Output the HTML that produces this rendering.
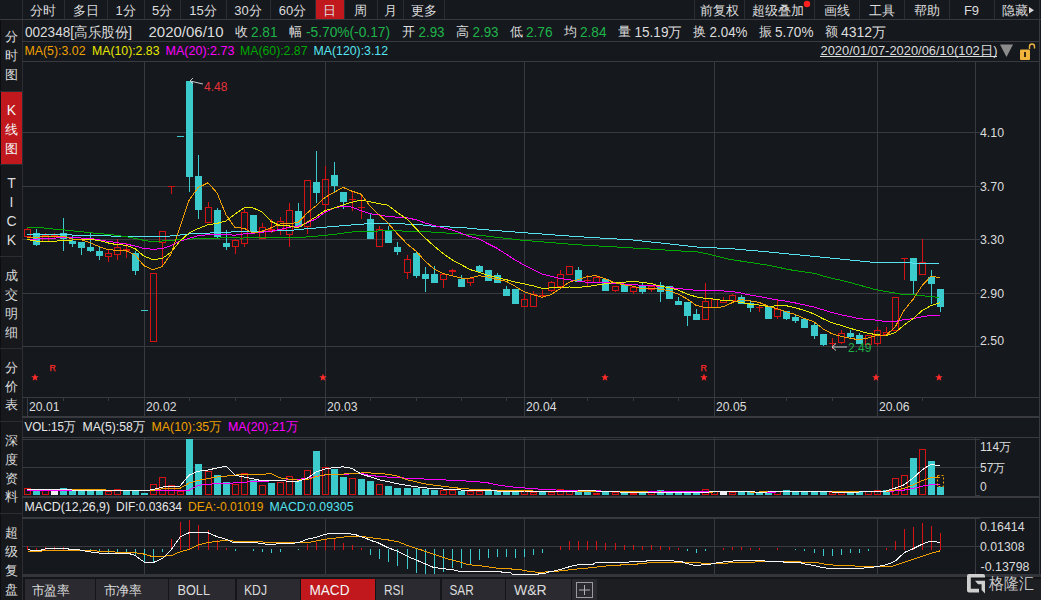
<!DOCTYPE html><html><head><meta charset="utf-8"><style>html,body{margin:0;padding:0;background:#15181d;overflow:hidden}svg{display:block;font-family:"Liberation Sans",sans-serif}</style></head><body>
<svg width="1041" height="600" viewBox="0 0 1041 600">
<rect x="0" y="0" width="1041" height="600" fill="#15181d"/>
<g shape-rendering="crispEdges">
<rect x="0" y="19" width="22" height="581" fill="#16181c"/>
<rect x="0" y="19" width="1" height="581" fill="#0c0d10"/>
<rect x="22" y="19" width="1" height="581" fill="#2c2d32"/>
<rect x="0" y="91" width="22" height="1" fill="#2c2d32"/>
<rect x="0" y="164" width="22" height="1" fill="#2c2d32"/>
<rect x="0" y="256" width="22" height="1" fill="#2c2d32"/>
<rect x="0" y="348" width="22" height="1" fill="#2c2d32"/>
<rect x="0" y="421" width="22" height="1" fill="#2c2d32"/>
<rect x="0" y="513" width="22" height="1" fill="#2c2d32"/>
<rect x="1" y="92" width="21" height="72" fill="#c0181c"/>
<rect x="0" y="19" width="1041" height="1" fill="#393a40"/>
<rect x="22" y="0" width="1" height="19" fill="#2c2d32"/>
<rect x="64" y="0" width="1" height="19" fill="#2c2d32"/>
<rect x="107" y="0" width="1" height="19" fill="#2c2d32"/>
<rect x="144" y="0" width="1" height="19" fill="#2c2d32"/>
<rect x="180" y="0" width="1" height="19" fill="#2c2d32"/>
<rect x="226" y="0" width="1" height="19" fill="#2c2d32"/>
<rect x="270" y="0" width="1" height="19" fill="#2c2d32"/>
<rect x="315" y="0" width="1" height="19" fill="#2c2d32"/>
<rect x="344" y="0" width="1" height="19" fill="#2c2d32"/>
<rect x="377" y="0" width="1" height="19" fill="#2c2d32"/>
<rect x="403" y="0" width="1" height="19" fill="#2c2d32"/>
<rect x="444" y="0" width="1" height="19" fill="#2c2d32"/>
<rect x="694" y="0" width="1" height="19" fill="#2c2d32"/>
<rect x="744" y="0" width="1" height="19" fill="#2c2d32"/>
<rect x="814" y="0" width="1" height="19" fill="#2c2d32"/>
<rect x="859" y="0" width="1" height="19" fill="#2c2d32"/>
<rect x="904" y="0" width="1" height="19" fill="#2c2d32"/>
<rect x="949" y="0" width="1" height="19" fill="#2c2d32"/>
<rect x="994" y="0" width="1" height="19" fill="#2c2d32"/>
<rect x="1039" y="0" width="1" height="19" fill="#2c2d32"/>
<rect x="316" y="0" width="28" height="19" fill="#c0181c"/>
<rect x="22" y="41" width="1018" height="1" fill="#393a40"/>
<rect x="22" y="61" width="1018" height="1" fill="#393a40"/>
<rect x="1039" y="19" width="1" height="559" fill="#393a40"/>
<rect x="22" y="132" width="958" height="1" fill="#393a40"/>
<rect x="22" y="186" width="958" height="1" fill="#393a40"/>
<rect x="22" y="239" width="958" height="1" fill="#393a40"/>
<rect x="22" y="293" width="958" height="1" fill="#393a40"/>
<rect x="22" y="346" width="958" height="1" fill="#393a40"/>
<rect x="144" y="62" width="1" height="335" fill="#393a40"/>
<rect x="325" y="62" width="1" height="335" fill="#393a40"/>
<rect x="524" y="62" width="1" height="335" fill="#393a40"/>
<rect x="714" y="62" width="1" height="335" fill="#393a40"/>
<rect x="877" y="62" width="1" height="335" fill="#393a40"/>
<rect x="975" y="62" width="1" height="335" fill="#393a40"/>
<rect x="22" y="397" width="1018" height="1" fill="#393a40"/>
<rect x="27" y="398" width="1" height="18" fill="#393a40"/>
<rect x="144" y="398" width="1" height="18" fill="#393a40"/>
<rect x="325" y="398" width="1" height="18" fill="#393a40"/>
<rect x="524" y="398" width="1" height="18" fill="#393a40"/>
<rect x="714" y="398" width="1" height="18" fill="#393a40"/>
<rect x="877" y="398" width="1" height="18" fill="#393a40"/>
<rect x="63" y="398" width="1" height="3" fill="#393a40"/>
<rect x="108" y="398" width="1" height="3" fill="#393a40"/>
<rect x="189" y="398" width="1" height="3" fill="#393a40"/>
<rect x="235" y="398" width="1" height="3" fill="#393a40"/>
<rect x="280" y="398" width="1" height="3" fill="#393a40"/>
<rect x="370" y="398" width="1" height="3" fill="#393a40"/>
<rect x="416" y="398" width="1" height="3" fill="#393a40"/>
<rect x="461" y="398" width="1" height="3" fill="#393a40"/>
<rect x="506" y="398" width="1" height="3" fill="#393a40"/>
<rect x="551" y="398" width="1" height="3" fill="#393a40"/>
<rect x="587" y="398" width="1" height="3" fill="#393a40"/>
<rect x="633" y="398" width="1" height="3" fill="#393a40"/>
<rect x="678" y="398" width="1" height="3" fill="#393a40"/>
<rect x="741" y="398" width="1" height="3" fill="#393a40"/>
<rect x="786" y="398" width="1" height="3" fill="#393a40"/>
<rect x="832" y="398" width="1" height="3" fill="#393a40"/>
<rect x="922" y="398" width="1" height="3" fill="#393a40"/>
<rect x="22" y="416" width="1018" height="2" fill="#393a40"/>
<rect x="22" y="437" width="1018" height="1" fill="#393a40"/>
<rect x="22" y="467" width="958" height="1" fill="#393a40"/>
<rect x="22" y="439" width="958" height="1" fill="#393a40"/>
<rect x="975" y="495" width="5" height="1" fill="#393a40"/>
<rect x="144" y="438" width="1" height="57" fill="#393a40"/>
<rect x="325" y="438" width="1" height="57" fill="#393a40"/>
<rect x="524" y="438" width="1" height="57" fill="#393a40"/>
<rect x="714" y="438" width="1" height="57" fill="#393a40"/>
<rect x="877" y="438" width="1" height="57" fill="#393a40"/>
<rect x="975" y="438" width="1" height="58" fill="#393a40"/>
<rect x="22" y="496" width="1018" height="2" fill="#393a40"/>
<rect x="22" y="517" width="1018" height="1" fill="#393a40"/>
<rect x="22" y="546" width="958" height="1" fill="#393a40"/>
<rect x="22" y="518" width="958" height="1" fill="#393a40"/>
<rect x="144" y="518" width="1" height="56" fill="#393a40"/>
<rect x="325" y="518" width="1" height="56" fill="#393a40"/>
<rect x="524" y="518" width="1" height="56" fill="#393a40"/>
<rect x="714" y="518" width="1" height="56" fill="#393a40"/>
<rect x="877" y="518" width="1" height="56" fill="#393a40"/>
<rect x="975" y="518" width="1" height="56" fill="#393a40"/>
<rect x="22" y="574" width="1019" height="3" fill="#34353a"/>
<rect x="23" y="577" width="1018" height="23" fill="#141519"/>
<rect x="25" y="579" width="70" height="21" fill="#2a2a30"/>
<rect x="96" y="579" width="72" height="21" fill="#2a2a30"/>
<rect x="169" y="579" width="66" height="21" fill="#2a2a30"/>
<rect x="237" y="579" width="63" height="21" fill="#2a2a30"/>
<rect x="301" y="579" width="74" height="21" fill="#2a2a30"/>
<rect x="376" y="579" width="64" height="21" fill="#2a2a30"/>
<rect x="442" y="579" width="63" height="21" fill="#2a2a30"/>
<rect x="506" y="579" width="65" height="21" fill="#2a2a30"/>
<rect x="572" y="579" width="25" height="21" fill="#2a2a30"/>
<rect x="301" y="579" width="74" height="21" fill="#c0181c"/>
<rect x="597" y="579" width="444" height="21" fill="#1d1e22"/>
</g>
<g shape-rendering="crispEdges">
<rect x="27" y="228" width="1" height="1" fill="#d41414"/>
<rect x="24" y="229" width="7" height="1" fill="#d41414"/>
<rect x="24" y="236" width="7" height="1" fill="#d41414"/>
<rect x="24" y="229" width="1" height="7" fill="#d41414"/>
<rect x="30" y="229" width="1" height="7" fill="#d41414"/>
<rect x="36" y="229" width="1" height="4" fill="#3ccbcc"/>
<rect x="36" y="244" width="1" height="2" fill="#3ccbcc"/>
<rect x="33" y="233" width="7" height="12" fill="#3ccbcc"/>
<rect x="45" y="233" width="1" height="2" fill="#d41414"/>
<rect x="42" y="235" width="7" height="1" fill="#d41414"/>
<rect x="42" y="241" width="7" height="1" fill="#d41414"/>
<rect x="42" y="235" width="1" height="6" fill="#d41414"/>
<rect x="48" y="235" width="1" height="6" fill="#d41414"/>
<rect x="54" y="233" width="1" height="5" fill="#d41414"/>
<rect x="51" y="235" width="7" height="1" fill="#d41414"/>
<rect x="63" y="218" width="1" height="15" fill="#3ccbcc"/>
<rect x="63" y="238" width="1" height="13" fill="#3ccbcc"/>
<rect x="60" y="233" width="7" height="6" fill="#3ccbcc"/>
<rect x="72" y="236" width="1" height="5" fill="#3ccbcc"/>
<rect x="72" y="243" width="1" height="4" fill="#3ccbcc"/>
<rect x="69" y="241" width="7" height="3" fill="#3ccbcc"/>
<rect x="81" y="247" width="1" height="8" fill="#3ccbcc"/>
<rect x="78" y="242" width="7" height="6" fill="#3ccbcc"/>
<rect x="90" y="232" width="1" height="15" fill="#3ccbcc"/>
<rect x="90" y="250" width="1" height="2" fill="#3ccbcc"/>
<rect x="87" y="247" width="7" height="4" fill="#3ccbcc"/>
<rect x="99" y="247" width="1" height="4" fill="#3ccbcc"/>
<rect x="99" y="255" width="1" height="5" fill="#3ccbcc"/>
<rect x="96" y="251" width="7" height="5" fill="#3ccbcc"/>
<rect x="108" y="250" width="1" height="3" fill="#d41414"/>
<rect x="108" y="256" width="1" height="6" fill="#d41414"/>
<rect x="105" y="253" width="7" height="1" fill="#d41414"/>
<rect x="105" y="256" width="7" height="1" fill="#d41414"/>
<rect x="105" y="253" width="1" height="3" fill="#d41414"/>
<rect x="111" y="253" width="1" height="3" fill="#d41414"/>
<rect x="117" y="239" width="1" height="8" fill="#d41414"/>
<rect x="117" y="254" width="1" height="6" fill="#d41414"/>
<rect x="114" y="247" width="7" height="1" fill="#d41414"/>
<rect x="114" y="254" width="7" height="1" fill="#d41414"/>
<rect x="114" y="247" width="1" height="7" fill="#d41414"/>
<rect x="120" y="247" width="1" height="7" fill="#d41414"/>
<rect x="126" y="243" width="1" height="15" fill="#d41414"/>
<rect x="123" y="249" width="7" height="2" fill="#d41414"/>
<rect x="135" y="251" width="1" height="2" fill="#3ccbcc"/>
<rect x="135" y="270" width="1" height="5" fill="#3ccbcc"/>
<rect x="132" y="253" width="7" height="18" fill="#3ccbcc"/>
<rect x="141" y="310" width="7" height="1" fill="#3ccbcc"/>
<rect x="150" y="273" width="7" height="1" fill="#d41414"/>
<rect x="150" y="341" width="7" height="1" fill="#d41414"/>
<rect x="150" y="273" width="1" height="68" fill="#d41414"/>
<rect x="156" y="273" width="1" height="68" fill="#d41414"/>
<rect x="162" y="242" width="1" height="23" fill="#d41414"/>
<rect x="159" y="231" width="7" height="1" fill="#d41414"/>
<rect x="159" y="242" width="7" height="1" fill="#d41414"/>
<rect x="159" y="231" width="1" height="11" fill="#d41414"/>
<rect x="165" y="231" width="1" height="11" fill="#d41414"/>
<rect x="168" y="186" width="7" height="1" fill="#d41414"/>
<rect x="171" y="186" width="1" height="8" fill="#d41414"/>
<rect x="177" y="136" width="7" height="1" fill="#3ccbcc"/>
<rect x="189" y="176" width="1" height="16" fill="#3ccbcc"/>
<rect x="186" y="81" width="7" height="96" fill="#3ccbcc"/>
<rect x="198" y="155" width="1" height="21" fill="#3ccbcc"/>
<rect x="198" y="209" width="1" height="10" fill="#3ccbcc"/>
<rect x="195" y="176" width="7" height="34" fill="#3ccbcc"/>
<rect x="208" y="202" width="1" height="5" fill="#d41414"/>
<rect x="205" y="207" width="7" height="1" fill="#d41414"/>
<rect x="205" y="222" width="7" height="1" fill="#d41414"/>
<rect x="205" y="207" width="1" height="15" fill="#d41414"/>
<rect x="211" y="207" width="1" height="15" fill="#d41414"/>
<rect x="217" y="208" width="1" height="2" fill="#3ccbcc"/>
<rect x="217" y="236" width="1" height="3" fill="#3ccbcc"/>
<rect x="214" y="210" width="7" height="27" fill="#3ccbcc"/>
<rect x="226" y="230" width="1" height="13" fill="#3ccbcc"/>
<rect x="226" y="246" width="1" height="4" fill="#3ccbcc"/>
<rect x="223" y="243" width="7" height="4" fill="#3ccbcc"/>
<rect x="235" y="239" width="1" height="1" fill="#d41414"/>
<rect x="235" y="246" width="1" height="8" fill="#d41414"/>
<rect x="232" y="240" width="7" height="1" fill="#d41414"/>
<rect x="232" y="246" width="7" height="1" fill="#d41414"/>
<rect x="232" y="240" width="1" height="6" fill="#d41414"/>
<rect x="238" y="240" width="1" height="6" fill="#d41414"/>
<rect x="244" y="209" width="1" height="3" fill="#d41414"/>
<rect x="244" y="243" width="1" height="4" fill="#d41414"/>
<rect x="241" y="212" width="7" height="1" fill="#d41414"/>
<rect x="241" y="243" width="7" height="1" fill="#d41414"/>
<rect x="241" y="212" width="1" height="31" fill="#d41414"/>
<rect x="247" y="212" width="1" height="31" fill="#d41414"/>
<rect x="250" y="215" width="7" height="17" fill="#3ccbcc"/>
<rect x="262" y="223" width="1" height="4" fill="#d41414"/>
<rect x="259" y="227" width="7" height="1" fill="#d41414"/>
<rect x="259" y="238" width="7" height="1" fill="#d41414"/>
<rect x="259" y="227" width="1" height="11" fill="#d41414"/>
<rect x="265" y="227" width="1" height="11" fill="#d41414"/>
<rect x="271" y="219" width="1" height="14" fill="#d41414"/>
<rect x="268" y="229" width="7" height="3" fill="#d41414"/>
<rect x="280" y="217" width="1" height="4" fill="#d41414"/>
<rect x="280" y="229" width="1" height="6" fill="#d41414"/>
<rect x="277" y="221" width="7" height="1" fill="#d41414"/>
<rect x="277" y="229" width="7" height="1" fill="#d41414"/>
<rect x="277" y="221" width="1" height="8" fill="#d41414"/>
<rect x="283" y="221" width="1" height="8" fill="#d41414"/>
<rect x="289" y="203" width="1" height="7" fill="#d41414"/>
<rect x="289" y="234" width="1" height="13" fill="#d41414"/>
<rect x="286" y="210" width="7" height="1" fill="#d41414"/>
<rect x="286" y="234" width="7" height="1" fill="#d41414"/>
<rect x="286" y="210" width="1" height="24" fill="#d41414"/>
<rect x="292" y="210" width="1" height="24" fill="#d41414"/>
<rect x="298" y="203" width="1" height="8" fill="#3ccbcc"/>
<rect x="295" y="211" width="7" height="16" fill="#3ccbcc"/>
<rect x="307" y="226" width="1" height="8" fill="#d41414"/>
<rect x="304" y="180" width="7" height="1" fill="#d41414"/>
<rect x="304" y="226" width="7" height="1" fill="#d41414"/>
<rect x="304" y="180" width="1" height="46" fill="#d41414"/>
<rect x="310" y="180" width="1" height="46" fill="#d41414"/>
<rect x="316" y="151" width="1" height="31" fill="#3ccbcc"/>
<rect x="316" y="192" width="1" height="11" fill="#3ccbcc"/>
<rect x="313" y="182" width="7" height="11" fill="#3ccbcc"/>
<rect x="325" y="166" width="1" height="13" fill="#d41414"/>
<rect x="325" y="204" width="1" height="7" fill="#d41414"/>
<rect x="322" y="179" width="7" height="1" fill="#d41414"/>
<rect x="322" y="204" width="7" height="1" fill="#d41414"/>
<rect x="322" y="179" width="1" height="25" fill="#d41414"/>
<rect x="328" y="179" width="1" height="25" fill="#d41414"/>
<rect x="334" y="162" width="1" height="13" fill="#3ccbcc"/>
<rect x="334" y="185" width="1" height="7" fill="#3ccbcc"/>
<rect x="331" y="175" width="7" height="11" fill="#3ccbcc"/>
<rect x="343" y="201" width="1" height="8" fill="#3ccbcc"/>
<rect x="340" y="192" width="7" height="10" fill="#3ccbcc"/>
<rect x="352" y="192" width="1" height="19" fill="#d41414"/>
<rect x="349" y="199" width="7" height="1" fill="#d41414"/>
<rect x="361" y="195" width="1" height="24" fill="#d41414"/>
<rect x="358" y="207" width="7" height="1" fill="#d41414"/>
<rect x="370" y="214" width="1" height="5" fill="#3ccbcc"/>
<rect x="367" y="219" width="7" height="20" fill="#3ccbcc"/>
<rect x="379" y="226" width="1" height="3" fill="#d41414"/>
<rect x="376" y="229" width="7" height="1" fill="#d41414"/>
<rect x="376" y="246" width="7" height="1" fill="#d41414"/>
<rect x="376" y="229" width="1" height="17" fill="#d41414"/>
<rect x="382" y="229" width="1" height="17" fill="#d41414"/>
<rect x="388" y="226" width="1" height="5" fill="#3ccbcc"/>
<rect x="385" y="231" width="7" height="12" fill="#3ccbcc"/>
<rect x="397" y="242" width="1" height="5" fill="#3ccbcc"/>
<rect x="397" y="251" width="1" height="4" fill="#3ccbcc"/>
<rect x="394" y="247" width="7" height="5" fill="#3ccbcc"/>
<rect x="407" y="255" width="1" height="4" fill="#d41414"/>
<rect x="407" y="272" width="1" height="7" fill="#d41414"/>
<rect x="404" y="259" width="7" height="1" fill="#d41414"/>
<rect x="404" y="272" width="7" height="1" fill="#d41414"/>
<rect x="404" y="259" width="1" height="13" fill="#d41414"/>
<rect x="410" y="259" width="1" height="13" fill="#d41414"/>
<rect x="416" y="251" width="1" height="2" fill="#3ccbcc"/>
<rect x="416" y="275" width="1" height="3" fill="#3ccbcc"/>
<rect x="413" y="253" width="7" height="23" fill="#3ccbcc"/>
<rect x="425" y="267" width="1" height="7" fill="#3ccbcc"/>
<rect x="425" y="278" width="1" height="14" fill="#3ccbcc"/>
<rect x="422" y="274" width="7" height="5" fill="#3ccbcc"/>
<rect x="434" y="266" width="1" height="8" fill="#3ccbcc"/>
<rect x="431" y="274" width="7" height="9" fill="#3ccbcc"/>
<rect x="443" y="279" width="1" height="9" fill="#d41414"/>
<rect x="440" y="274" width="7" height="1" fill="#d41414"/>
<rect x="440" y="279" width="7" height="1" fill="#d41414"/>
<rect x="440" y="274" width="1" height="5" fill="#d41414"/>
<rect x="446" y="274" width="1" height="5" fill="#d41414"/>
<rect x="452" y="269" width="1" height="7" fill="#d41414"/>
<rect x="449" y="270" width="7" height="2" fill="#d41414"/>
<rect x="461" y="275" width="1" height="4" fill="#3ccbcc"/>
<rect x="458" y="279" width="7" height="8" fill="#3ccbcc"/>
<rect x="470" y="282" width="1" height="4" fill="#d41414"/>
<rect x="467" y="278" width="7" height="1" fill="#d41414"/>
<rect x="467" y="282" width="7" height="1" fill="#d41414"/>
<rect x="467" y="278" width="1" height="4" fill="#d41414"/>
<rect x="473" y="278" width="1" height="4" fill="#d41414"/>
<rect x="479" y="265" width="1" height="1" fill="#3ccbcc"/>
<rect x="476" y="266" width="7" height="6" fill="#3ccbcc"/>
<rect x="485" y="270" width="7" height="11" fill="#3ccbcc"/>
<rect x="497" y="273" width="1" height="2" fill="#3ccbcc"/>
<rect x="494" y="275" width="7" height="8" fill="#3ccbcc"/>
<rect x="506" y="286" width="1" height="3" fill="#3ccbcc"/>
<rect x="503" y="289" width="7" height="7" fill="#3ccbcc"/>
<rect x="512" y="289" width="7" height="15" fill="#3ccbcc"/>
<rect x="524" y="294" width="1" height="5" fill="#d41414"/>
<rect x="521" y="299" width="7" height="1" fill="#d41414"/>
<rect x="521" y="306" width="7" height="1" fill="#d41414"/>
<rect x="521" y="299" width="1" height="7" fill="#d41414"/>
<rect x="527" y="299" width="1" height="7" fill="#d41414"/>
<rect x="533" y="291" width="1" height="3" fill="#d41414"/>
<rect x="530" y="294" width="7" height="1" fill="#d41414"/>
<rect x="530" y="306" width="7" height="1" fill="#d41414"/>
<rect x="530" y="294" width="1" height="12" fill="#d41414"/>
<rect x="536" y="294" width="1" height="12" fill="#d41414"/>
<rect x="542" y="290" width="1" height="8" fill="#d41414"/>
<rect x="539" y="295" width="7" height="1" fill="#d41414"/>
<rect x="551" y="281" width="1" height="1" fill="#d41414"/>
<rect x="551" y="290" width="1" height="2" fill="#d41414"/>
<rect x="548" y="282" width="7" height="1" fill="#d41414"/>
<rect x="548" y="290" width="7" height="1" fill="#d41414"/>
<rect x="548" y="282" width="1" height="8" fill="#d41414"/>
<rect x="554" y="282" width="1" height="8" fill="#d41414"/>
<rect x="560" y="270" width="1" height="4" fill="#d41414"/>
<rect x="557" y="274" width="7" height="1" fill="#d41414"/>
<rect x="557" y="286" width="7" height="1" fill="#d41414"/>
<rect x="557" y="274" width="1" height="12" fill="#d41414"/>
<rect x="563" y="274" width="1" height="12" fill="#d41414"/>
<rect x="566" y="266" width="7" height="1" fill="#d41414"/>
<rect x="566" y="274" width="7" height="1" fill="#d41414"/>
<rect x="566" y="266" width="1" height="8" fill="#d41414"/>
<rect x="572" y="266" width="1" height="8" fill="#d41414"/>
<rect x="578" y="267" width="1" height="3" fill="#3ccbcc"/>
<rect x="575" y="270" width="7" height="12" fill="#3ccbcc"/>
<rect x="587" y="275" width="1" height="12" fill="#d41414"/>
<rect x="584" y="280" width="7" height="1" fill="#d41414"/>
<rect x="596" y="275" width="1" height="2" fill="#d41414"/>
<rect x="593" y="277" width="7" height="1" fill="#d41414"/>
<rect x="593" y="282" width="7" height="1" fill="#d41414"/>
<rect x="593" y="277" width="1" height="5" fill="#d41414"/>
<rect x="599" y="277" width="1" height="5" fill="#d41414"/>
<rect x="602" y="279" width="7" height="12" fill="#3ccbcc"/>
<rect x="615" y="290" width="1" height="2" fill="#d41414"/>
<rect x="612" y="286" width="7" height="1" fill="#d41414"/>
<rect x="612" y="290" width="7" height="1" fill="#d41414"/>
<rect x="612" y="286" width="1" height="4" fill="#d41414"/>
<rect x="618" y="286" width="1" height="4" fill="#d41414"/>
<rect x="621" y="284" width="7" height="8" fill="#3ccbcc"/>
<rect x="633" y="291" width="1" height="3" fill="#d41414"/>
<rect x="630" y="287" width="7" height="1" fill="#d41414"/>
<rect x="630" y="291" width="7" height="1" fill="#d41414"/>
<rect x="630" y="287" width="1" height="4" fill="#d41414"/>
<rect x="636" y="287" width="1" height="4" fill="#d41414"/>
<rect x="642" y="283" width="1" height="3" fill="#3ccbcc"/>
<rect x="642" y="291" width="1" height="3" fill="#3ccbcc"/>
<rect x="639" y="286" width="7" height="6" fill="#3ccbcc"/>
<rect x="651" y="285" width="1" height="1" fill="#d41414"/>
<rect x="651" y="289" width="1" height="3" fill="#d41414"/>
<rect x="648" y="286" width="7" height="1" fill="#d41414"/>
<rect x="648" y="289" width="7" height="1" fill="#d41414"/>
<rect x="648" y="286" width="1" height="3" fill="#d41414"/>
<rect x="654" y="286" width="1" height="3" fill="#d41414"/>
<rect x="660" y="282" width="1" height="3" fill="#3ccbcc"/>
<rect x="660" y="291" width="1" height="11" fill="#3ccbcc"/>
<rect x="657" y="285" width="7" height="7" fill="#3ccbcc"/>
<rect x="666" y="286" width="7" height="13" fill="#3ccbcc"/>
<rect x="678" y="297" width="1" height="4" fill="#3ccbcc"/>
<rect x="675" y="301" width="7" height="4" fill="#3ccbcc"/>
<rect x="687" y="315" width="1" height="11" fill="#3ccbcc"/>
<rect x="684" y="302" width="7" height="14" fill="#3ccbcc"/>
<rect x="696" y="309" width="1" height="5" fill="#3ccbcc"/>
<rect x="693" y="314" width="7" height="6" fill="#3ccbcc"/>
<rect x="705" y="283" width="1" height="18" fill="#d41414"/>
<rect x="702" y="301" width="7" height="1" fill="#d41414"/>
<rect x="702" y="319" width="7" height="1" fill="#d41414"/>
<rect x="702" y="301" width="1" height="18" fill="#d41414"/>
<rect x="708" y="301" width="1" height="18" fill="#d41414"/>
<rect x="711" y="299" width="7" height="1" fill="#d41414"/>
<rect x="711" y="307" width="7" height="1" fill="#d41414"/>
<rect x="711" y="299" width="1" height="8" fill="#d41414"/>
<rect x="717" y="299" width="1" height="8" fill="#d41414"/>
<rect x="723" y="297" width="1" height="3" fill="#d41414"/>
<rect x="720" y="300" width="7" height="1" fill="#d41414"/>
<rect x="720" y="302" width="7" height="1" fill="#d41414"/>
<rect x="720" y="300" width="1" height="2" fill="#d41414"/>
<rect x="726" y="300" width="1" height="2" fill="#d41414"/>
<rect x="732" y="294" width="1" height="1" fill="#d41414"/>
<rect x="732" y="300" width="1" height="3" fill="#d41414"/>
<rect x="729" y="295" width="7" height="1" fill="#d41414"/>
<rect x="729" y="300" width="7" height="1" fill="#d41414"/>
<rect x="729" y="295" width="1" height="5" fill="#d41414"/>
<rect x="735" y="295" width="1" height="5" fill="#d41414"/>
<rect x="741" y="295" width="1" height="2" fill="#3ccbcc"/>
<rect x="738" y="297" width="7" height="7" fill="#3ccbcc"/>
<rect x="750" y="301" width="1" height="2" fill="#3ccbcc"/>
<rect x="750" y="307" width="1" height="5" fill="#3ccbcc"/>
<rect x="747" y="303" width="7" height="5" fill="#3ccbcc"/>
<rect x="759" y="305" width="1" height="7" fill="#d41414"/>
<rect x="756" y="307" width="7" height="1" fill="#d41414"/>
<rect x="765" y="307" width="7" height="12" fill="#3ccbcc"/>
<rect x="777" y="300" width="1" height="9" fill="#d41414"/>
<rect x="777" y="316" width="1" height="3" fill="#d41414"/>
<rect x="774" y="309" width="7" height="1" fill="#d41414"/>
<rect x="774" y="316" width="7" height="1" fill="#d41414"/>
<rect x="774" y="309" width="1" height="7" fill="#d41414"/>
<rect x="780" y="309" width="1" height="7" fill="#d41414"/>
<rect x="786" y="318" width="1" height="2" fill="#3ccbcc"/>
<rect x="783" y="311" width="7" height="8" fill="#3ccbcc"/>
<rect x="795" y="315" width="1" height="2" fill="#3ccbcc"/>
<rect x="795" y="320" width="1" height="3" fill="#3ccbcc"/>
<rect x="792" y="317" width="7" height="4" fill="#3ccbcc"/>
<rect x="801" y="319" width="7" height="9" fill="#3ccbcc"/>
<rect x="814" y="322" width="1" height="3" fill="#3ccbcc"/>
<rect x="814" y="335" width="1" height="4" fill="#3ccbcc"/>
<rect x="811" y="325" width="7" height="11" fill="#3ccbcc"/>
<rect x="823" y="344" width="1" height="2" fill="#3ccbcc"/>
<rect x="820" y="334" width="7" height="11" fill="#3ccbcc"/>
<rect x="832" y="338" width="1" height="11" fill="#d41414"/>
<rect x="829" y="343" width="7" height="1" fill="#d41414"/>
<rect x="841" y="330" width="1" height="3" fill="#d41414"/>
<rect x="841" y="342" width="1" height="2" fill="#d41414"/>
<rect x="838" y="333" width="7" height="1" fill="#d41414"/>
<rect x="838" y="342" width="7" height="1" fill="#d41414"/>
<rect x="838" y="333" width="1" height="9" fill="#d41414"/>
<rect x="844" y="333" width="1" height="9" fill="#d41414"/>
<rect x="850" y="330" width="1" height="3" fill="#3ccbcc"/>
<rect x="850" y="336" width="1" height="3" fill="#3ccbcc"/>
<rect x="847" y="333" width="7" height="4" fill="#3ccbcc"/>
<rect x="859" y="333" width="1" height="2" fill="#3ccbcc"/>
<rect x="856" y="335" width="7" height="9" fill="#3ccbcc"/>
<rect x="865" y="335" width="7" height="1" fill="#d41414"/>
<rect x="865" y="344" width="7" height="1" fill="#d41414"/>
<rect x="865" y="335" width="1" height="9" fill="#d41414"/>
<rect x="871" y="335" width="1" height="9" fill="#d41414"/>
<rect x="877" y="327" width="1" height="3" fill="#d41414"/>
<rect x="877" y="343" width="1" height="3" fill="#d41414"/>
<rect x="874" y="330" width="7" height="1" fill="#d41414"/>
<rect x="874" y="343" width="7" height="1" fill="#d41414"/>
<rect x="874" y="330" width="1" height="13" fill="#d41414"/>
<rect x="880" y="330" width="1" height="13" fill="#d41414"/>
<rect x="886" y="327" width="1" height="5" fill="#d41414"/>
<rect x="883" y="332" width="7" height="1" fill="#d41414"/>
<rect x="883" y="334" width="7" height="1" fill="#d41414"/>
<rect x="883" y="332" width="1" height="2" fill="#d41414"/>
<rect x="889" y="332" width="1" height="2" fill="#d41414"/>
<rect x="892" y="297" width="7" height="1" fill="#d41414"/>
<rect x="892" y="330" width="7" height="1" fill="#d41414"/>
<rect x="892" y="297" width="1" height="33" fill="#d41414"/>
<rect x="898" y="297" width="1" height="33" fill="#d41414"/>
<rect x="901" y="258" width="7" height="1" fill="#d41414"/>
<rect x="904" y="258" width="1" height="22" fill="#d41414"/>
<rect x="913" y="280" width="1" height="14" fill="#3ccbcc"/>
<rect x="910" y="258" width="7" height="23" fill="#3ccbcc"/>
<rect x="922" y="239" width="1" height="23" fill="#d41414"/>
<rect x="919" y="262" width="7" height="1" fill="#d41414"/>
<rect x="919" y="274" width="7" height="1" fill="#d41414"/>
<rect x="919" y="262" width="1" height="12" fill="#d41414"/>
<rect x="925" y="262" width="1" height="12" fill="#d41414"/>
<rect x="931" y="270" width="1" height="7" fill="#3ccbcc"/>
<rect x="931" y="283" width="1" height="21" fill="#3ccbcc"/>
<rect x="928" y="277" width="7" height="7" fill="#3ccbcc"/>
<rect x="940" y="306" width="1" height="6" fill="#3ccbcc"/>
<rect x="937" y="289" width="7" height="18" fill="#3ccbcc"/>
</g>
<g shape-rendering="crispEdges">
<polyline points="27.0,234.6 30.0,234.6 33.0,234.6 36.0,234.7 39.0,234.7 42.0,234.7 45.0,234.7 48.0,234.8 51.0,234.8 54.0,234.8 57.0,234.8 60.0,234.8 63.0,234.9 66.0,234.9 69.0,234.9 72.0,235.0 75.0,235.1 78.0,235.2 81.0,235.2 84.0,235.3 87.0,235.4 90.0,235.5 93.0,235.5 96.0,235.6 99.0,235.7 102.0,235.8 105.0,235.9 108.0,235.9 111.0,236.0 114.0,236.1 117.0,236.2 120.0,236.2 123.0,236.3 126.0,236.4 129.0,236.5 132.0,236.5 135.0,236.6 138.0,236.6 141.0,236.6 144.0,236.7 147.0,236.7 150.0,236.8 153.0,236.8 156.0,236.8 159.0,236.9 162.0,236.7 165.0,236.5 168.0,236.2 171.0,235.9 174.0,235.7 177.0,235.4 180.0,235.0 183.0,234.6 186.0,234.2 189.0,234.0 192.0,233.9 195.0,233.8 198.0,233.6 201.0,233.4 204.0,233.3 207.0,233.2 210.0,233.0 213.0,232.8 216.0,232.7 219.0,232.6 222.0,232.4 225.0,232.2 228.0,232.1 231.0,232.0 234.0,231.9 237.0,231.8 240.0,231.7 243.0,231.7 246.0,231.6 249.0,231.5 252.0,231.5 255.0,231.4 258.0,231.3 261.0,231.3 264.0,231.2 267.0,231.1 270.0,231.1 273.0,231.0 276.0,230.9 279.0,230.9 282.0,230.8 285.0,230.7 288.0,230.5 291.0,230.2 294.0,230.0 297.0,229.7 300.0,229.4 303.0,229.1 306.0,228.9 309.0,228.6 312.0,228.3 315.0,228.1 318.0,227.8 321.0,227.5 324.0,227.2 327.0,227.0 330.0,226.7 333.0,226.4 336.0,226.2 339.0,226.0 342.0,225.7 345.0,225.5 348.0,225.3 351.0,225.0 354.0,224.8 357.0,224.6 360.0,224.3 363.0,224.1 366.0,223.9 369.0,223.8 372.0,223.8 375.0,223.8 378.0,223.8 381.0,223.8 384.0,223.8 387.0,223.8 390.0,223.8 393.0,223.8 396.0,223.8 399.0,223.8 402.0,223.8 405.0,224.0 408.0,224.1 411.0,224.3 414.0,224.4 417.0,224.6 420.0,224.7 423.0,225.0 426.0,225.4 429.0,225.7 432.0,226.1 435.0,226.4 438.0,226.6 441.0,226.7 444.0,226.8 447.0,226.9 450.0,227.0 453.0,227.1 456.0,227.2 459.0,227.3 462.0,227.5 465.0,227.8 468.0,228.1 471.0,228.4 474.0,228.7 477.0,229.0 480.0,229.3 483.0,229.5 486.0,229.8 489.0,230.0 492.0,230.2 495.0,230.5 498.0,230.7 501.0,230.9 504.0,231.2 507.0,231.4 510.0,231.6 513.0,231.9 516.0,232.1 519.0,232.3 522.0,232.5 525.0,232.8 528.0,233.0 531.0,233.2 534.0,233.4 537.0,233.7 540.0,233.9 543.0,234.1 546.0,234.3 549.0,234.6 552.0,234.8 555.0,235.0 558.0,235.2 561.0,235.5 564.0,235.7 567.0,235.9 570.0,236.1 573.0,236.4 576.0,236.6 579.0,236.7 582.0,236.9 585.0,237.1 588.0,237.3 591.0,237.5 594.0,237.6 597.0,237.8 600.0,238.0 603.0,238.2 606.0,238.4 609.0,238.6 612.0,238.7 615.0,238.9 618.0,239.1 621.0,239.3 624.0,239.5 627.0,239.6 630.0,239.8 633.0,240.0 636.0,240.3 639.0,240.7 642.0,241.0 645.0,241.3 648.0,241.6 651.0,242.0 654.0,242.3 657.0,242.6 660.0,242.9 663.0,243.3 666.0,243.6 669.0,243.9 672.0,244.2 675.0,244.6 678.0,244.9 681.0,245.2 684.0,245.6 687.0,245.9 690.0,246.2 693.0,246.5 696.0,246.9 699.0,247.2 702.0,247.4 705.0,247.5 708.0,247.6 711.0,247.7 714.0,247.9 717.0,248.0 720.0,248.1 723.0,248.2 726.0,248.3 729.0,248.5 732.0,248.8 735.0,249.0 738.0,249.3 741.0,249.5 744.0,249.8 747.0,250.1 750.0,250.3 753.0,250.6 756.0,250.9 759.0,251.1 762.0,251.4 765.0,251.6 768.0,251.9 771.0,252.2 774.0,252.5 777.0,252.8 780.0,253.1 783.0,253.4 786.0,253.7 789.0,254.0 792.0,254.2 795.0,254.5 798.0,254.8 801.0,255.1 804.0,255.4 807.0,255.7 810.0,256.0 813.0,256.3 816.0,256.6 819.0,256.9 822.0,257.2 825.0,257.5 828.0,257.8 831.0,258.1 834.0,258.4 837.0,258.7 840.0,259.0 843.0,259.3 846.0,259.6 849.0,259.9 852.0,260.2 855.0,260.5 858.0,260.8 861.0,261.1 864.0,261.4 867.0,261.7 870.0,262.0 873.0,262.3 876.0,262.4 879.0,262.4 882.0,262.5 885.0,262.5 888.0,262.6 891.0,262.6 894.0,262.7 897.0,262.7 900.0,262.8 903.0,262.8 906.0,262.9 909.0,262.9 912.0,263.0 915.0,263.1 918.0,263.1 921.0,263.2 924.0,263.2 927.0,263.3 930.0,263.3 933.0,263.4 936.0,263.4 939.0,263.5" fill="none" stroke="#55e4f0" stroke-width="1"/>
<polyline points="27.0,227.7 30.0,227.7 33.0,227.7 36.0,227.7 39.0,227.7 42.0,227.8 45.0,228.2 48.0,228.6 51.0,228.9 54.0,229.1 57.0,229.4 60.0,229.6 63.0,229.9 66.0,230.1 69.0,230.4 72.0,230.7 75.0,231.1 78.0,231.4 81.0,231.7 84.0,232.0 87.0,232.4 90.0,232.7 93.0,233.0 96.0,233.3 99.0,233.6 102.0,233.9 105.0,234.1 108.0,234.4 111.0,234.7 114.0,235.0 117.0,235.4 120.0,235.9 123.0,236.3 126.0,236.8 129.0,237.2 132.0,237.8 135.0,238.4 138.0,239.0 141.0,239.7 144.0,240.3 147.0,240.9 150.0,241.5 153.0,241.4 156.0,241.3 159.0,241.2 162.0,241.0 165.0,240.9 168.0,240.8 171.0,240.4 174.0,240.1 177.0,239.7 180.0,239.5 183.0,239.3 186.0,239.2 189.0,239.1 192.0,239.0 195.0,238.9 198.0,238.8 201.0,238.7 204.0,238.6 207.0,238.5 210.0,238.4 213.0,238.3 216.0,238.2 219.0,238.1 222.0,237.9 225.0,237.8 228.0,237.7 231.0,237.6 234.0,237.7 237.0,237.8 240.0,238.0 243.0,238.0 246.0,237.9 249.0,237.9 252.0,237.9 255.0,237.8 258.0,237.8 261.0,237.8 264.0,237.7 267.0,237.7 270.0,237.7 273.0,237.7 276.0,237.6 279.0,237.6 282.0,237.5 285.0,237.4 288.0,237.4 291.0,237.3 294.0,237.2 297.0,237.2 300.0,237.1 303.0,237.0 306.0,237.0 309.0,236.9 312.0,236.6 315.0,236.3 318.0,236.0 321.0,235.7 324.0,235.4 327.0,235.1 330.0,234.8 333.0,234.5 336.0,234.1 339.0,233.7 342.0,233.3 345.0,232.9 348.0,232.5 351.0,232.1 354.0,231.7 357.0,231.5 360.0,231.5 363.0,231.4 366.0,231.3 369.0,231.2 372.0,231.2 375.0,231.1 378.0,231.0 381.0,230.9 384.0,230.9 387.0,230.8 390.0,230.7 393.0,230.8 396.0,230.9 399.0,230.9 402.0,231.0 405.0,231.1 408.0,231.2 411.0,231.2 414.0,231.3 417.0,231.4 420.0,231.5 423.0,231.5 426.0,231.7 429.0,231.9 432.0,232.1 435.0,232.3 438.0,232.5 441.0,232.7 444.0,232.9 447.0,233.1 450.0,233.3 453.0,233.5 456.0,233.7 459.0,233.9 462.0,234.1 465.0,234.3 468.0,234.5 471.0,234.7 474.0,234.9 477.0,235.1 480.0,235.3 483.0,235.7 486.0,236.0 489.0,236.4 492.0,236.7 495.0,237.1 498.0,237.4 501.0,237.8 504.0,238.1 507.0,238.5 510.0,238.8 513.0,239.2 516.0,239.5 519.0,239.9 522.0,240.2 525.0,240.4 528.0,240.7 531.0,240.9 534.0,241.2 537.0,241.4 540.0,241.7 543.0,241.9 546.0,242.2 549.0,242.4 552.0,242.7 555.0,242.9 558.0,243.2 561.0,243.4 564.0,243.7 567.0,243.9 570.0,244.2 573.0,244.4 576.0,244.7 579.0,244.8 582.0,245.0 585.0,245.2 588.0,245.4 591.0,245.5 594.0,245.7 597.0,245.9 600.0,246.1 603.0,246.2 606.0,246.4 609.0,246.6 612.0,246.8 615.0,246.9 618.0,247.1 621.0,247.3 624.0,247.5 627.0,247.6 630.0,247.8 633.0,248.0 636.0,248.2 639.0,248.4 642.0,248.6 645.0,248.8 648.0,248.9 651.0,249.1 654.0,249.3 657.0,249.5 660.0,249.7 663.0,249.9 666.0,250.1 669.0,250.3 672.0,250.4 675.0,250.6 678.0,250.8 681.0,251.0 684.0,251.2 687.0,251.4 690.0,251.6 693.0,251.8 696.0,251.9 699.0,252.1 702.0,252.7 705.0,253.4 708.0,254.1 711.0,254.8 714.0,255.6 717.0,256.3 720.0,257.0 723.0,257.7 726.0,258.4 729.0,259.2 732.0,259.7 735.0,260.2 738.0,260.6 741.0,261.1 744.0,261.6 747.0,262.0 750.0,262.5 753.0,262.9 756.0,263.4 759.0,263.8 762.0,264.3 765.0,264.7 768.0,265.2 771.0,265.7 774.0,266.4 777.0,267.0 780.0,267.7 783.0,268.3 786.0,268.9 789.0,269.6 792.0,270.1 795.0,270.5 798.0,271.0 801.0,271.4 804.0,271.9 807.0,272.3 810.0,272.8 813.0,273.2 816.0,273.8 819.0,274.7 822.0,275.6 825.0,276.5 828.0,277.2 831.0,277.9 834.0,278.7 837.0,279.4 840.0,280.1 843.0,280.8 846.0,281.5 849.0,282.3 852.0,283.1 855.0,283.9 858.0,284.7 861.0,285.6 864.0,286.4 867.0,287.2 870.0,288.1 873.0,288.9 876.0,289.7 879.0,290.2 882.0,290.8 885.0,291.3 888.0,291.8 891.0,292.4 894.0,292.9 897.0,293.5 900.0,294.0 903.0,294.2 906.0,294.4 909.0,294.6 912.0,294.8 915.0,294.9 918.0,295.2 921.0,295.5 924.0,295.9 927.0,296.2 930.0,296.5 933.0,296.8 936.0,297.2 939.0,297.5" fill="none" stroke="#00a800" stroke-width="1"/>
<polyline points="27.0,240.0 36.0,239.2 45.0,238.5 54.0,238.1 63.0,237.6 72.0,237.6 81.0,238.0 90.0,238.5 99.0,239.8 108.0,241.3 117.0,242.7 126.0,244.0 135.0,246.0 144.0,248.5 153.0,249.3 162.0,248.6 171.0,245.7 180.0,241.1 189.0,238.4 198.0,235.8 208.0,234.7 217.0,234.3 226.0,234.8 235.0,235.1 244.0,233.8 253.0,233.2 262.0,232.2 271.0,231.2 280.0,229.4 289.0,227.3 298.0,226.2 307.0,222.8 316.0,218.9 325.0,212.3 334.0,207.9 343.0,206.4 352.0,207.1 361.0,210.7 370.0,213.8 379.0,214.8 388.0,216.5 397.0,217.2 407.0,217.9 416.0,219.7 425.0,222.9 434.0,225.5 443.0,227.8 452.0,229.9 461.0,233.2 470.0,236.6 479.0,238.8 488.0,243.8 497.0,248.3 506.0,254.1 515.0,260.0 524.0,264.9 533.0,269.6 542.0,274.1 551.0,276.2 560.0,278.5 569.0,279.7 578.0,281.2 587.0,282.2 596.0,282.4 605.0,282.9 615.0,283.1 624.0,284.0 633.0,284.9 642.0,285.1 651.0,285.5 660.0,286.5 669.0,287.4 678.0,288.5 687.0,289.5 696.0,290.3 705.0,290.4 714.0,290.6 723.0,290.9 732.0,291.6 741.0,293.0 750.0,295.1 759.0,296.4 768.0,298.2 777.0,299.9 786.0,301.2 795.0,302.9 804.0,304.8 814.0,307.1 823.0,309.8 832.0,312.6 841.0,314.8 850.0,316.6 859.0,318.6 868.0,319.6 877.0,320.1 886.0,321.7 895.0,321.6 904.0,319.5 913.0,318.8 922.0,316.7 931.0,315.5 940.0,315.4" fill="none" stroke="#ff00ff" stroke-width="1"/>
<polyline points="27.0,239.5 36.0,241.0 45.0,241.0 54.0,241.5 63.0,240.0 72.0,240.0 81.0,239.5 90.0,239.5 99.0,240.5 108.0,242.9 117.0,244.7 126.0,245.2 135.0,248.7 144.0,256.2 153.0,259.7 162.0,258.5 171.0,252.4 180.0,241.0 189.0,233.1 198.0,228.7 208.0,224.7 217.0,223.4 226.0,221.0 235.0,214.0 244.0,207.9 253.0,207.9 262.0,212.0 271.0,221.3 280.0,225.8 289.0,225.9 298.0,227.8 307.0,222.2 316.0,216.8 325.0,210.7 334.0,208.0 343.0,205.0 352.0,202.2 361.0,200.0 370.0,201.7 379.0,203.6 388.0,205.2 397.0,212.3 407.0,219.0 416.0,228.6 425.0,237.9 434.0,246.0 443.0,253.5 452.0,259.8 461.0,264.6 470.0,269.5 479.0,272.4 488.0,275.3 497.0,277.6 506.0,279.6 515.0,282.1 524.0,283.8 533.0,285.8 542.0,288.3 551.0,287.9 560.0,287.5 569.0,287.0 578.0,287.1 587.0,286.9 596.0,285.1 605.0,283.8 615.0,282.5 624.0,282.2 633.0,281.4 642.0,282.3 651.0,283.5 660.0,286.0 669.0,287.7 678.0,290.1 687.0,293.9 696.0,296.8 705.0,298.3 714.0,299.1 723.0,300.4 732.0,300.8 741.0,302.5 750.0,304.1 759.0,305.0 768.0,306.4 777.0,305.8 786.0,305.7 795.0,307.6 804.0,310.4 814.0,313.9 823.0,318.8 832.0,322.8 841.0,325.4 850.0,328.3 859.0,330.8 868.0,333.4 877.0,334.6 886.0,335.8 895.0,332.8 904.0,325.1 913.0,318.7 922.0,310.6 931.0,305.6 940.0,302.6" fill="none" stroke="#e8e800" stroke-width="1"/>
<polyline points="27.0,238.0 36.0,237.5 45.0,236.5 54.0,236.5 63.0,236.2 72.0,239.0 81.0,239.6 90.0,242.6 99.0,246.6 108.0,249.6 117.0,250.4 126.0,250.8 135.0,254.8 144.0,265.8 153.0,269.8 162.0,266.6 171.0,254.0 180.0,227.2 189.0,200.4 198.0,187.6 208.0,182.8 217.0,192.8 226.0,214.8 235.0,227.6 244.0,228.2 253.0,233.0 262.0,231.2 271.0,227.8 280.0,224.0 289.0,223.6 298.0,222.6 307.0,213.2 316.0,205.8 325.0,197.4 334.0,192.4 343.0,187.4 352.0,191.2 361.0,194.2 370.0,206.0 379.0,214.8 388.0,223.0 397.0,233.4 407.0,243.8 416.0,251.2 425.0,261.0 434.0,269.0 443.0,273.6 452.0,275.8 461.0,278.0 470.0,278.0 479.0,275.8 488.0,277.0 497.0,279.4 506.0,281.2 515.0,286.2 524.0,291.8 533.0,294.6 542.0,297.2 551.0,294.6 560.0,288.8 569.0,282.2 578.0,279.6 587.0,276.6 596.0,275.6 605.0,278.8 615.0,282.8 624.0,284.8 633.0,286.2 642.0,289.0 651.0,288.2 660.0,289.2 669.0,290.6 678.0,294.0 687.0,298.8 696.0,305.4 705.0,307.4 714.0,307.6 723.0,306.8 732.0,302.8 741.0,299.6 750.0,300.8 759.0,302.4 768.0,306.0 777.0,308.8 786.0,311.8 795.0,314.4 804.0,318.4 814.0,321.8 823.0,328.8 832.0,333.8 841.0,336.4 850.0,338.2 859.0,339.8 868.0,338.0 877.0,335.4 886.0,335.2 895.0,327.4 904.0,310.4 913.0,299.4 922.0,285.8 931.0,276.0 940.0,277.8" fill="none" stroke="#f0a000" stroke-width="1"/>
</g>
<g stroke="#c8c8c8" stroke-width="1" fill="none"><polyline points="190,81 203,84"/><polyline points="193,78 190,81 193,84"/></g>
<text x="204" y="91" font-size="12" fill="#e8333a" >4.48</text>
<g stroke="#c8c8c8" stroke-width="1" fill="none"><polyline points="832,347 847,347"/><polyline points="836,343.5 832,347 836,350.5"/></g>
<text x="848" y="352" font-size="12" fill="#20b048" >2.49</text>
<polygon points="35.00,373.50 35.99,376.14 38.80,376.26 36.60,378.02 37.35,380.74 35.00,379.18 32.65,380.74 33.40,378.02 31.20,376.26 34.01,376.14" fill="#ff2a2a"/>
<polygon points="323.00,373.50 323.99,376.14 326.80,376.26 324.60,378.02 325.35,380.74 323.00,379.18 320.65,380.74 321.40,378.02 319.20,376.26 322.01,376.14" fill="#ff2a2a"/>
<polygon points="605.00,373.50 605.99,376.14 608.80,376.26 606.60,378.02 607.35,380.74 605.00,379.18 602.65,380.74 603.40,378.02 601.20,376.26 604.01,376.14" fill="#ff2a2a"/>
<polygon points="704.00,373.50 704.99,376.14 707.80,376.26 705.60,378.02 706.35,380.74 704.00,379.18 701.65,380.74 702.40,378.02 700.20,376.26 703.01,376.14" fill="#ff2a2a"/>
<polygon points="876.00,373.50 876.99,376.14 879.80,376.26 877.60,378.02 878.35,380.74 876.00,379.18 873.65,380.74 874.40,378.02 872.20,376.26 875.01,376.14" fill="#ff2a2a"/>
<polygon points="939.00,373.50 939.99,376.14 942.80,376.26 940.60,378.02 941.35,380.74 939.00,379.18 936.65,380.74 937.40,378.02 935.20,376.26 938.01,376.14" fill="#ff2a2a"/>
<text x="49.5" y="371" font-size="8.6" fill="#ff2a2a" stroke="#ff2a2a" stroke-width="0.25">R</text>
<text x="700.5" y="371" font-size="8.6" fill="#ff2a2a" stroke="#ff2a2a" stroke-width="0.25">R</text>
<g shape-rendering="crispEdges">
<rect x="24" y="488" width="7" height="1" fill="#d41414"/>
<rect x="24" y="494" width="7" height="1" fill="#d41414"/>
<rect x="24" y="488" width="1" height="7" fill="#d41414"/>
<rect x="30" y="488" width="1" height="7" fill="#d41414"/>
<rect x="33" y="491" width="7" height="4" fill="#3ccbcc"/>
<rect x="42" y="489" width="7" height="1" fill="#d41414"/>
<rect x="42" y="494" width="7" height="1" fill="#d41414"/>
<rect x="42" y="489" width="1" height="6" fill="#d41414"/>
<rect x="48" y="489" width="1" height="6" fill="#d41414"/>
<rect x="51" y="491" width="7" height="4" fill="#f0f0f0"/>
<rect x="60" y="488" width="7" height="7" fill="#3ccbcc"/>
<rect x="69" y="491" width="7" height="4" fill="#3ccbcc"/>
<rect x="78" y="491" width="7" height="4" fill="#3ccbcc"/>
<rect x="87" y="491" width="7" height="4" fill="#3ccbcc"/>
<rect x="96" y="491" width="7" height="4" fill="#3ccbcc"/>
<rect x="105" y="491" width="7" height="1" fill="#d41414"/>
<rect x="105" y="494" width="7" height="1" fill="#d41414"/>
<rect x="105" y="491" width="1" height="4" fill="#d41414"/>
<rect x="111" y="491" width="1" height="4" fill="#d41414"/>
<rect x="114" y="489" width="7" height="1" fill="#d41414"/>
<rect x="114" y="494" width="7" height="1" fill="#d41414"/>
<rect x="114" y="489" width="1" height="6" fill="#d41414"/>
<rect x="120" y="489" width="1" height="6" fill="#d41414"/>
<rect x="123" y="491" width="7" height="4" fill="#3ccbcc"/>
<rect x="132" y="491" width="7" height="4" fill="#3ccbcc"/>
<rect x="141" y="493" width="7" height="2" fill="#3ccbcc"/>
<rect x="150" y="484" width="7" height="1" fill="#d41414"/>
<rect x="150" y="494" width="7" height="1" fill="#d41414"/>
<rect x="150" y="484" width="1" height="11" fill="#d41414"/>
<rect x="156" y="484" width="1" height="11" fill="#d41414"/>
<rect x="159" y="477" width="7" height="1" fill="#d41414"/>
<rect x="159" y="494" width="7" height="1" fill="#d41414"/>
<rect x="159" y="477" width="1" height="18" fill="#d41414"/>
<rect x="165" y="477" width="1" height="18" fill="#d41414"/>
<rect x="168" y="485" width="7" height="1" fill="#d41414"/>
<rect x="168" y="494" width="7" height="1" fill="#d41414"/>
<rect x="168" y="485" width="1" height="10" fill="#d41414"/>
<rect x="174" y="485" width="1" height="10" fill="#d41414"/>
<rect x="177" y="491" width="7" height="1" fill="#d41414"/>
<rect x="177" y="494" width="7" height="1" fill="#d41414"/>
<rect x="177" y="491" width="1" height="4" fill="#d41414"/>
<rect x="183" y="491" width="1" height="4" fill="#d41414"/>
<rect x="186" y="439" width="7" height="56" fill="#3ccbcc"/>
<rect x="195" y="464" width="7" height="31" fill="#3ccbcc"/>
<rect x="205" y="471" width="7" height="1" fill="#d41414"/>
<rect x="205" y="494" width="7" height="1" fill="#d41414"/>
<rect x="205" y="471" width="1" height="24" fill="#d41414"/>
<rect x="211" y="471" width="1" height="24" fill="#d41414"/>
<rect x="214" y="475" width="7" height="20" fill="#3ccbcc"/>
<rect x="223" y="482" width="7" height="13" fill="#3ccbcc"/>
<rect x="232" y="484" width="7" height="1" fill="#d41414"/>
<rect x="232" y="494" width="7" height="1" fill="#d41414"/>
<rect x="232" y="484" width="1" height="11" fill="#d41414"/>
<rect x="238" y="484" width="1" height="11" fill="#d41414"/>
<rect x="241" y="473" width="7" height="1" fill="#d41414"/>
<rect x="241" y="494" width="7" height="1" fill="#d41414"/>
<rect x="241" y="473" width="1" height="22" fill="#d41414"/>
<rect x="247" y="473" width="1" height="22" fill="#d41414"/>
<rect x="250" y="480" width="7" height="15" fill="#3ccbcc"/>
<rect x="259" y="485" width="7" height="1" fill="#d41414"/>
<rect x="259" y="494" width="7" height="1" fill="#d41414"/>
<rect x="259" y="485" width="1" height="10" fill="#d41414"/>
<rect x="265" y="485" width="1" height="10" fill="#d41414"/>
<rect x="268" y="483" width="7" height="12" fill="#3ccbcc"/>
<rect x="277" y="482" width="7" height="1" fill="#d41414"/>
<rect x="277" y="494" width="7" height="1" fill="#d41414"/>
<rect x="277" y="482" width="1" height="13" fill="#d41414"/>
<rect x="283" y="482" width="1" height="13" fill="#d41414"/>
<rect x="286" y="476" width="7" height="1" fill="#d41414"/>
<rect x="286" y="494" width="7" height="1" fill="#d41414"/>
<rect x="286" y="476" width="1" height="19" fill="#d41414"/>
<rect x="292" y="476" width="1" height="19" fill="#d41414"/>
<rect x="295" y="481" width="7" height="14" fill="#3ccbcc"/>
<rect x="304" y="470" width="7" height="1" fill="#d41414"/>
<rect x="304" y="494" width="7" height="1" fill="#d41414"/>
<rect x="304" y="470" width="1" height="25" fill="#d41414"/>
<rect x="310" y="470" width="1" height="25" fill="#d41414"/>
<rect x="313" y="451" width="7" height="44" fill="#3ccbcc"/>
<rect x="322" y="467" width="7" height="1" fill="#d41414"/>
<rect x="322" y="494" width="7" height="1" fill="#d41414"/>
<rect x="322" y="467" width="1" height="28" fill="#d41414"/>
<rect x="328" y="467" width="1" height="28" fill="#d41414"/>
<rect x="331" y="469" width="7" height="26" fill="#3ccbcc"/>
<rect x="340" y="477" width="7" height="18" fill="#3ccbcc"/>
<rect x="349" y="478" width="7" height="1" fill="#d41414"/>
<rect x="349" y="494" width="7" height="1" fill="#d41414"/>
<rect x="349" y="478" width="1" height="17" fill="#d41414"/>
<rect x="355" y="478" width="1" height="17" fill="#d41414"/>
<rect x="358" y="479" width="7" height="16" fill="#3ccbcc"/>
<rect x="367" y="481" width="7" height="14" fill="#3ccbcc"/>
<rect x="376" y="484" width="7" height="1" fill="#d41414"/>
<rect x="376" y="494" width="7" height="1" fill="#d41414"/>
<rect x="376" y="484" width="1" height="11" fill="#d41414"/>
<rect x="382" y="484" width="1" height="11" fill="#d41414"/>
<rect x="385" y="486" width="7" height="9" fill="#3ccbcc"/>
<rect x="394" y="488" width="7" height="7" fill="#3ccbcc"/>
<rect x="404" y="488" width="7" height="7" fill="#3ccbcc"/>
<rect x="413" y="488" width="7" height="7" fill="#3ccbcc"/>
<rect x="422" y="489" width="7" height="6" fill="#3ccbcc"/>
<rect x="431" y="490" width="7" height="5" fill="#3ccbcc"/>
<rect x="440" y="490" width="7" height="1" fill="#d41414"/>
<rect x="440" y="494" width="7" height="1" fill="#d41414"/>
<rect x="440" y="490" width="1" height="5" fill="#d41414"/>
<rect x="446" y="490" width="1" height="5" fill="#d41414"/>
<rect x="449" y="490" width="7" height="1" fill="#d41414"/>
<rect x="449" y="494" width="7" height="1" fill="#d41414"/>
<rect x="449" y="490" width="1" height="5" fill="#d41414"/>
<rect x="455" y="490" width="1" height="5" fill="#d41414"/>
<rect x="458" y="491" width="7" height="4" fill="#3ccbcc"/>
<rect x="467" y="491" width="7" height="1" fill="#d41414"/>
<rect x="467" y="494" width="7" height="1" fill="#d41414"/>
<rect x="467" y="491" width="1" height="4" fill="#d41414"/>
<rect x="473" y="491" width="1" height="4" fill="#d41414"/>
<rect x="476" y="491" width="7" height="1" fill="#d41414"/>
<rect x="476" y="494" width="7" height="1" fill="#d41414"/>
<rect x="476" y="491" width="1" height="4" fill="#d41414"/>
<rect x="482" y="491" width="1" height="4" fill="#d41414"/>
<rect x="485" y="491" width="7" height="4" fill="#3ccbcc"/>
<rect x="494" y="491" width="7" height="4" fill="#3ccbcc"/>
<rect x="503" y="491" width="7" height="4" fill="#3ccbcc"/>
<rect x="512" y="491" width="7" height="4" fill="#3ccbcc"/>
<rect x="521" y="491" width="7" height="1" fill="#d41414"/>
<rect x="521" y="494" width="7" height="1" fill="#d41414"/>
<rect x="521" y="491" width="1" height="4" fill="#d41414"/>
<rect x="527" y="491" width="1" height="4" fill="#d41414"/>
<rect x="530" y="492" width="7" height="1" fill="#d41414"/>
<rect x="530" y="494" width="7" height="1" fill="#d41414"/>
<rect x="530" y="492" width="1" height="3" fill="#d41414"/>
<rect x="536" y="492" width="1" height="3" fill="#d41414"/>
<rect x="539" y="492" width="7" height="3" fill="#3ccbcc"/>
<rect x="548" y="492" width="7" height="1" fill="#d41414"/>
<rect x="548" y="494" width="7" height="1" fill="#d41414"/>
<rect x="548" y="492" width="1" height="3" fill="#d41414"/>
<rect x="554" y="492" width="1" height="3" fill="#d41414"/>
<rect x="557" y="489" width="7" height="1" fill="#d41414"/>
<rect x="557" y="494" width="7" height="1" fill="#d41414"/>
<rect x="557" y="489" width="1" height="6" fill="#d41414"/>
<rect x="563" y="489" width="1" height="6" fill="#d41414"/>
<rect x="566" y="491" width="7" height="1" fill="#d41414"/>
<rect x="566" y="494" width="7" height="1" fill="#d41414"/>
<rect x="566" y="491" width="1" height="4" fill="#d41414"/>
<rect x="572" y="491" width="1" height="4" fill="#d41414"/>
<rect x="575" y="491" width="7" height="4" fill="#3ccbcc"/>
<rect x="584" y="491" width="7" height="4" fill="#3ccbcc"/>
<rect x="593" y="493" width="7" height="2" fill="#d41414"/>
<rect x="602" y="492" width="7" height="3" fill="#3ccbcc"/>
<rect x="612" y="492" width="7" height="1" fill="#d41414"/>
<rect x="612" y="494" width="7" height="1" fill="#d41414"/>
<rect x="612" y="492" width="1" height="3" fill="#d41414"/>
<rect x="618" y="492" width="1" height="3" fill="#d41414"/>
<rect x="621" y="493" width="7" height="2" fill="#3ccbcc"/>
<rect x="630" y="493" width="7" height="2" fill="#d41414"/>
<rect x="639" y="493" width="7" height="2" fill="#3ccbcc"/>
<rect x="648" y="492" width="7" height="1" fill="#d41414"/>
<rect x="648" y="494" width="7" height="1" fill="#d41414"/>
<rect x="648" y="492" width="1" height="3" fill="#d41414"/>
<rect x="654" y="492" width="1" height="3" fill="#d41414"/>
<rect x="657" y="490" width="7" height="5" fill="#3ccbcc"/>
<rect x="666" y="493" width="7" height="2" fill="#3ccbcc"/>
<rect x="675" y="493" width="7" height="2" fill="#3ccbcc"/>
<rect x="684" y="493" width="7" height="2" fill="#3ccbcc"/>
<rect x="693" y="493" width="7" height="2" fill="#3ccbcc"/>
<rect x="702" y="489" width="7" height="1" fill="#d41414"/>
<rect x="702" y="494" width="7" height="1" fill="#d41414"/>
<rect x="702" y="489" width="1" height="6" fill="#d41414"/>
<rect x="708" y="489" width="1" height="6" fill="#d41414"/>
<rect x="711" y="491" width="7" height="1" fill="#d41414"/>
<rect x="711" y="494" width="7" height="1" fill="#d41414"/>
<rect x="711" y="491" width="1" height="4" fill="#d41414"/>
<rect x="717" y="491" width="1" height="4" fill="#d41414"/>
<rect x="720" y="492" width="7" height="3" fill="#f0f0f0"/>
<rect x="729" y="492" width="7" height="1" fill="#d41414"/>
<rect x="729" y="494" width="7" height="1" fill="#d41414"/>
<rect x="729" y="492" width="1" height="3" fill="#d41414"/>
<rect x="735" y="492" width="1" height="3" fill="#d41414"/>
<rect x="738" y="492" width="7" height="3" fill="#3ccbcc"/>
<rect x="747" y="492" width="7" height="3" fill="#3ccbcc"/>
<rect x="756" y="493" width="7" height="2" fill="#3ccbcc"/>
<rect x="765" y="491" width="7" height="4" fill="#3ccbcc"/>
<rect x="774" y="491" width="7" height="1" fill="#d41414"/>
<rect x="774" y="494" width="7" height="1" fill="#d41414"/>
<rect x="774" y="491" width="1" height="4" fill="#d41414"/>
<rect x="780" y="491" width="1" height="4" fill="#d41414"/>
<rect x="783" y="490" width="7" height="5" fill="#3ccbcc"/>
<rect x="792" y="492" width="7" height="3" fill="#3ccbcc"/>
<rect x="801" y="492" width="7" height="3" fill="#3ccbcc"/>
<rect x="811" y="492" width="7" height="3" fill="#3ccbcc"/>
<rect x="820" y="492" width="7" height="3" fill="#3ccbcc"/>
<rect x="829" y="492" width="7" height="1" fill="#d41414"/>
<rect x="829" y="494" width="7" height="1" fill="#d41414"/>
<rect x="829" y="492" width="1" height="3" fill="#d41414"/>
<rect x="835" y="492" width="1" height="3" fill="#d41414"/>
<rect x="838" y="492" width="7" height="1" fill="#d41414"/>
<rect x="838" y="494" width="7" height="1" fill="#d41414"/>
<rect x="838" y="492" width="1" height="3" fill="#d41414"/>
<rect x="844" y="492" width="1" height="3" fill="#d41414"/>
<rect x="847" y="492" width="7" height="3" fill="#3ccbcc"/>
<rect x="856" y="492" width="7" height="3" fill="#3ccbcc"/>
<rect x="865" y="491" width="7" height="1" fill="#d41414"/>
<rect x="865" y="494" width="7" height="1" fill="#d41414"/>
<rect x="865" y="491" width="1" height="4" fill="#d41414"/>
<rect x="871" y="491" width="1" height="4" fill="#d41414"/>
<rect x="874" y="490" width="7" height="1" fill="#d41414"/>
<rect x="874" y="494" width="7" height="1" fill="#d41414"/>
<rect x="874" y="490" width="1" height="5" fill="#d41414"/>
<rect x="880" y="490" width="1" height="5" fill="#d41414"/>
<rect x="883" y="490" width="7" height="5" fill="#3ccbcc"/>
<rect x="892" y="478" width="7" height="1" fill="#d41414"/>
<rect x="892" y="494" width="7" height="1" fill="#d41414"/>
<rect x="892" y="478" width="1" height="17" fill="#d41414"/>
<rect x="898" y="478" width="1" height="17" fill="#d41414"/>
<rect x="901" y="475" width="7" height="1" fill="#d41414"/>
<rect x="901" y="494" width="7" height="1" fill="#d41414"/>
<rect x="901" y="475" width="1" height="20" fill="#d41414"/>
<rect x="907" y="475" width="1" height="20" fill="#d41414"/>
<rect x="910" y="458" width="7" height="37" fill="#3ccbcc"/>
<rect x="919" y="449" width="7" height="1" fill="#d41414"/>
<rect x="919" y="494" width="7" height="1" fill="#d41414"/>
<rect x="919" y="449" width="1" height="46" fill="#d41414"/>
<rect x="925" y="449" width="1" height="46" fill="#d41414"/>
<rect x="928" y="461" width="7" height="34" fill="#3ccbcc"/>
<rect x="937" y="487" width="7" height="8" fill="#3ccbcc"/>
</g>
<g shape-rendering="crispEdges">
<polyline points="27.0,490.3 36.0,490.3 45.0,490.3 54.0,490.3 63.0,490.3 72.0,490.3 81.0,490.3 90.0,490.3 99.0,490.3 108.0,490.3 117.0,490.3 126.0,490.3 135.0,490.3 144.0,490.3 153.0,490.3 162.0,490.3 171.0,490.3 180.0,490.3 189.0,490.3 198.0,485.3 208.0,484.4 217.0,483.6 226.0,483.3 235.0,482.9 244.0,482.2 253.0,481.6 262.0,481.4 271.0,480.9 280.0,480.5 289.0,479.8 298.0,479.4 307.0,478.3 316.0,476.3 325.0,475.0 334.0,474.2 343.0,474.2 352.0,473.9 361.0,473.3 370.0,475.4 379.0,476.4 388.0,477.1 397.0,477.8 407.0,478.1 416.0,478.3 425.0,479.1 434.0,479.6 443.0,479.9 452.0,480.2 461.0,480.6 470.0,481.4 479.0,481.9 488.0,482.9 497.0,484.9 506.0,486.1 515.0,487.2 524.0,487.9 533.0,488.6 542.0,489.3 551.0,489.9 560.0,490.1 569.0,490.4 578.0,490.5 587.0,490.6 596.0,490.9 605.0,491.1 615.0,491.1 624.0,491.3 633.0,491.4 642.0,491.6 651.0,491.6 660.0,491.6 669.0,491.6 678.0,491.8 687.0,491.9 696.0,491.9 705.0,491.9 714.0,491.8 723.0,491.8 732.0,491.8 741.0,491.9 750.0,492.0 759.0,492.1 768.0,492.1 777.0,492.0 786.0,491.9 795.0,491.9 804.0,491.9 814.0,491.8 823.0,491.8 832.0,491.8 841.0,491.9 850.0,491.8 859.0,491.8 868.0,491.6 877.0,491.5 886.0,491.6 895.0,490.9 904.0,490.1 913.0,488.4 922.0,486.2 931.0,484.6 940.0,484.4" fill="none" stroke="#ff00ff" stroke-width="1"/>
<polyline points="27.0,489.4 36.0,489.4 45.0,489.4 54.0,489.4 63.0,489.4 72.0,489.4 81.0,489.4 90.0,489.4 99.0,489.4 108.0,490.2 117.0,490.3 126.0,490.3 135.0,490.5 144.0,490.7 153.0,490.3 162.0,488.9 171.0,488.3 180.0,488.3 189.0,483.1 198.0,480.4 208.0,478.6 217.0,477.0 226.0,476.1 235.0,475.2 244.0,474.1 253.0,474.4 262.0,474.4 271.0,473.6 280.0,477.9 289.0,479.1 298.0,480.1 307.0,479.6 316.0,476.5 325.0,474.8 334.0,474.4 343.0,474.1 352.0,473.4 361.0,473.0 370.0,472.9 379.0,473.7 388.0,474.2 397.0,476.0 407.0,479.7 416.0,481.8 425.0,483.8 434.0,485.1 443.0,486.3 452.0,487.4 461.0,488.4 470.0,489.1 479.0,489.6 488.0,489.9 497.0,490.2 506.0,490.5 515.0,490.7 524.0,490.8 533.0,491.0 542.0,491.2 551.0,491.3 560.0,491.1 569.0,491.1 578.0,491.1 587.0,491.1 596.0,491.3 605.0,491.4 615.0,491.5 624.0,491.6 633.0,491.7 642.0,491.8 651.0,492.1 660.0,492.0 669.0,492.2 678.0,492.4 687.0,492.4 696.0,492.5 705.0,492.2 714.0,492.0 723.0,491.9 732.0,491.8 741.0,491.8 750.0,492.0 759.0,492.0 768.0,491.8 777.0,491.6 786.0,491.3 795.0,491.6 804.0,491.7 814.0,491.7 823.0,491.7 832.0,491.7 841.0,491.7 850.0,491.6 859.0,491.7 868.0,491.7 877.0,491.7 886.0,491.5 895.0,490.1 904.0,488.4 913.0,485.0 922.0,480.7 931.0,477.6 940.0,477.1" fill="none" stroke="#f0a000" stroke-width="1"/>
<polyline points="27.0,489.4 36.0,489.4 45.0,489.4 54.0,489.4 63.0,489.4 72.0,490.0 81.0,490.0 90.0,490.4 99.0,490.4 108.0,491.0 117.0,490.6 126.0,490.6 135.0,490.6 144.0,491.0 153.0,489.6 162.0,487.2 171.0,486.0 180.0,486.0 189.0,475.2 198.0,471.2 208.0,470.0 217.0,468.0 226.0,466.2 235.0,475.2 244.0,477.0 253.0,478.8 262.0,480.8 271.0,481.0 280.0,480.6 289.0,481.2 298.0,481.4 307.0,478.4 316.0,472.0 325.0,469.0 334.0,467.6 343.0,466.8 352.0,468.4 361.0,474.0 370.0,476.8 379.0,479.8 388.0,481.6 397.0,483.6 407.0,485.4 416.0,486.8 425.0,487.8 434.0,488.6 443.0,489.0 452.0,489.4 461.0,490.0 470.0,490.4 479.0,490.6 488.0,490.8 497.0,491.0 506.0,491.0 515.0,491.0 524.0,491.0 533.0,491.2 542.0,491.4 551.0,491.6 560.0,491.2 569.0,491.2 578.0,491.0 587.0,490.8 596.0,491.0 605.0,491.6 615.0,491.8 624.0,492.2 633.0,492.6 642.0,492.6 651.0,492.6 660.0,492.2 669.0,492.2 678.0,492.2 687.0,492.2 696.0,492.4 705.0,492.2 714.0,491.8 723.0,491.6 732.0,491.4 741.0,491.2 750.0,491.8 759.0,492.2 768.0,492.0 777.0,491.8 786.0,491.4 795.0,491.4 804.0,491.2 814.0,491.4 823.0,491.6 832.0,492.0 841.0,492.0 850.0,492.0 859.0,492.0 868.0,491.8 877.0,491.4 886.0,491.0 895.0,488.2 904.0,484.8 913.0,478.2 922.0,470.0 931.0,464.2 940.0,466.0" fill="none" stroke="#f4f4f4" stroke-width="1"/>
</g>
<rect x="937.5" y="475.5" width="6" height="11" fill="none" stroke="#f0a000" stroke-dasharray="2,2"/>
<g shape-rendering="crispEdges">
<rect x="27" y="546" width="1" height="4" fill="#d41414"/>
<rect x="36" y="548" width="1" height="2" fill="#d41414"/>
<rect x="45" y="547" width="1" height="3" fill="#d41414"/>
<rect x="54" y="547" width="1" height="3" fill="#d41414"/>
<rect x="63" y="547" width="1" height="3" fill="#d41414"/>
<rect x="72" y="549" width="1" height="1" fill="#d41414"/>
<rect x="90" y="549" width="1" height="3" fill="#3ccbcc"/>
<rect x="99" y="549" width="1" height="3" fill="#3ccbcc"/>
<rect x="108" y="549" width="1" height="4" fill="#3ccbcc"/>
<rect x="117" y="549" width="1" height="3" fill="#3ccbcc"/>
<rect x="126" y="549" width="1" height="3" fill="#3ccbcc"/>
<rect x="135" y="549" width="1" height="6" fill="#3ccbcc"/>
<rect x="144" y="549" width="1" height="14" fill="#3ccbcc"/>
<rect x="153" y="549" width="1" height="13" fill="#3ccbcc"/>
<rect x="162" y="549" width="1" height="3" fill="#3ccbcc"/>
<rect x="171" y="539" width="1" height="11" fill="#d41414"/>
<rect x="180" y="522" width="1" height="28" fill="#d41414"/>
<rect x="189" y="520" width="1" height="30" fill="#d41414"/>
<rect x="198" y="525" width="1" height="25" fill="#d41414"/>
<rect x="208" y="530" width="1" height="20" fill="#d41414"/>
<rect x="217" y="540" width="1" height="10" fill="#d41414"/>
<rect x="226" y="548" width="1" height="2" fill="#d41414"/>
<rect x="235" y="549" width="1" height="2" fill="#3ccbcc"/>
<rect x="253" y="549" width="1" height="2" fill="#3ccbcc"/>
<rect x="262" y="549" width="1" height="3" fill="#3ccbcc"/>
<rect x="271" y="549" width="1" height="4" fill="#3ccbcc"/>
<rect x="280" y="549" width="1" height="3" fill="#3ccbcc"/>
<rect x="298" y="549" width="1" height="1" fill="#3ccbcc"/>
<rect x="307" y="544" width="1" height="6" fill="#d41414"/>
<rect x="316" y="542" width="1" height="8" fill="#d41414"/>
<rect x="325" y="539" width="1" height="11" fill="#d41414"/>
<rect x="334" y="539" width="1" height="11" fill="#d41414"/>
<rect x="343" y="543" width="1" height="7" fill="#d41414"/>
<rect x="352" y="545" width="1" height="5" fill="#d41414"/>
<rect x="361" y="548" width="1" height="2" fill="#d41414"/>
<rect x="370" y="549" width="1" height="6" fill="#3ccbcc"/>
<rect x="379" y="549" width="1" height="10" fill="#3ccbcc"/>
<rect x="388" y="549" width="1" height="13" fill="#3ccbcc"/>
<rect x="397" y="549" width="1" height="17" fill="#3ccbcc"/>
<rect x="407" y="549" width="1" height="20" fill="#3ccbcc"/>
<rect x="416" y="549" width="1" height="24" fill="#3ccbcc"/>
<rect x="425" y="549" width="1" height="25" fill="#3ccbcc"/>
<rect x="434" y="549" width="1" height="25" fill="#3ccbcc"/>
<rect x="443" y="549" width="1" height="23" fill="#3ccbcc"/>
<rect x="452" y="549" width="1" height="19" fill="#3ccbcc"/>
<rect x="461" y="549" width="1" height="19" fill="#3ccbcc"/>
<rect x="470" y="549" width="1" height="15" fill="#3ccbcc"/>
<rect x="479" y="549" width="1" height="11" fill="#3ccbcc"/>
<rect x="488" y="549" width="1" height="9" fill="#3ccbcc"/>
<rect x="497" y="549" width="1" height="8" fill="#3ccbcc"/>
<rect x="506" y="549" width="1" height="8" fill="#3ccbcc"/>
<rect x="515" y="549" width="1" height="9" fill="#3ccbcc"/>
<rect x="524" y="549" width="1" height="8" fill="#3ccbcc"/>
<rect x="533" y="549" width="1" height="6" fill="#3ccbcc"/>
<rect x="542" y="549" width="1" height="4" fill="#3ccbcc"/>
<rect x="560" y="546" width="1" height="4" fill="#d41414"/>
<rect x="569" y="541" width="1" height="9" fill="#d41414"/>
<rect x="578" y="541" width="1" height="9" fill="#d41414"/>
<rect x="587" y="541" width="1" height="9" fill="#d41414"/>
<rect x="596" y="541" width="1" height="9" fill="#d41414"/>
<rect x="605" y="543" width="1" height="7" fill="#d41414"/>
<rect x="615" y="543" width="1" height="7" fill="#d41414"/>
<rect x="624" y="545" width="1" height="5" fill="#d41414"/>
<rect x="633" y="545" width="1" height="5" fill="#d41414"/>
<rect x="642" y="546" width="1" height="4" fill="#d41414"/>
<rect x="651" y="545" width="1" height="5" fill="#d41414"/>
<rect x="660" y="546" width="1" height="4" fill="#d41414"/>
<rect x="669" y="547" width="1" height="3" fill="#d41414"/>
<rect x="678" y="548" width="1" height="2" fill="#d41414"/>
<rect x="687" y="549" width="1" height="2" fill="#3ccbcc"/>
<rect x="696" y="549" width="1" height="4" fill="#3ccbcc"/>
<rect x="705" y="549" width="1" height="2" fill="#3ccbcc"/>
<rect x="723" y="548" width="1" height="2" fill="#d41414"/>
<rect x="732" y="547" width="1" height="3" fill="#d41414"/>
<rect x="741" y="547" width="1" height="3" fill="#d41414"/>
<rect x="750" y="548" width="1" height="2" fill="#d41414"/>
<rect x="759" y="548" width="1" height="2" fill="#d41414"/>
<rect x="777" y="548" width="1" height="2" fill="#d41414"/>
<rect x="795" y="549" width="1" height="1" fill="#3ccbcc"/>
<rect x="804" y="549" width="1" height="2" fill="#3ccbcc"/>
<rect x="814" y="549" width="1" height="4" fill="#3ccbcc"/>
<rect x="823" y="549" width="1" height="7" fill="#3ccbcc"/>
<rect x="832" y="549" width="1" height="7" fill="#3ccbcc"/>
<rect x="841" y="549" width="1" height="6" fill="#3ccbcc"/>
<rect x="850" y="549" width="1" height="4" fill="#3ccbcc"/>
<rect x="859" y="549" width="1" height="4" fill="#3ccbcc"/>
<rect x="868" y="549" width="1" height="2" fill="#3ccbcc"/>
<rect x="886" y="548" width="1" height="2" fill="#d41414"/>
<rect x="895" y="541" width="1" height="9" fill="#d41414"/>
<rect x="904" y="529" width="1" height="21" fill="#d41414"/>
<rect x="913" y="527" width="1" height="23" fill="#d41414"/>
<rect x="922" y="523" width="1" height="27" fill="#d41414"/>
<rect x="931" y="526" width="1" height="24" fill="#d41414"/>
<rect x="940" y="533" width="1" height="17" fill="#d41414"/>
<polyline points="27.8,551.7 41.0,551.7 41.0,550.5 86.0,550.5 103.8,551.3 122.3,552.5 137.3,553.0 142.0,553.6 151.5,556.3 163.1,556.3 172.3,555.3 180.3,551.7 189.6,549.4 198.8,544.7 207.4,542.7 216.1,541.3 227.6,540.4 238.0,541.5 260.0,541.7 267.2,542.4 301.8,542.4 311.0,542.1 319.1,540.4 324.9,539.2 331.8,538.6 339.8,537.5 350.2,536.3 364.1,536.7 373.3,538.1 378.0,538.6 387.5,539.8 399.1,542.1 410.6,546.7 422.1,550.2 433.6,554.2 445.2,558.2 456.7,561.1 468.2,564.6 479.7,565.7 496.0,568.0 502.1,568.6 511.3,568.6 511.3,569.8 520.5,569.8 528.6,571.3 537.8,572.4 554.0,571.5 565.5,570.3 574.7,569.2 593.1,567.5 602.4,566.3 614.0,565.3 620.1,565.5 620.1,564.6 637.9,564.6 637.9,563.4 646.6,563.4 647.2,562.3 700.8,562.3 701.3,563.2 727.3,563.2 732.0,562.3 754.8,562.3 755.4,561.3 800.9,561.3 800.9,562.3 818.8,562.3 819.3,563.4 828.0,564.6 837.2,565.4 854.8,565.5 855.3,566.6 890.7,566.6 897.1,564.7 904.5,562.3 914.0,558.9 922.4,556.2 931.9,553.0 939.9,550.9" fill="none" stroke="#f0a000" stroke-width="1"/>
<polyline points="27.8,549.4 32.4,550.7 41.0,551.0 41.6,549.4 50.2,548.4 68.1,548.4 68.1,549.4 76.8,549.4 86.0,551.3 95.2,552.5 104.4,553.6 129.2,553.6 135.0,555.3 142.0,560.5 144.6,562.3 153.8,562.3 163.1,558.2 171.7,549.0 180.3,536.9 189.6,532.5 207.4,532.5 216.1,536.3 227.6,539.8 232.2,542.1 249.5,542.1 260.0,543.2 267.2,544.4 275.9,544.4 276.4,543.2 293.7,543.2 301.8,541.7 306.4,539.4 315.6,537.5 324.9,534.4 330.6,533.4 347.9,533.4 356.0,534.8 365.2,538.1 373.3,541.3 378.0,542.7 387.5,547.5 399.1,551.9 410.6,557.7 422.1,562.5 433.6,567.5 442.9,568.6 456.7,570.3 459.0,571.5 500.9,571.5 502.1,572.4 510.1,572.4 512.4,574.4 537.8,574.4 539.0,573.6 544.7,573.6 549.3,571.7 555.1,570.9 563.2,568.6 574.7,565.1 593.1,564.3 595.4,562.5 628.7,562.3 629.3,561.3 646.6,561.3 647.2,560.3 673.7,560.3 674.2,561.5 681.2,561.5 685.8,563.4 690.4,564.3 693.8,565.4 700.8,565.4 702.0,564.3 710.0,564.3 719.2,562.3 728.4,561.5 736.9,560.5 764.6,560.5 765.2,561.3 783.0,561.3 783.0,562.3 800.9,562.3 801.5,563.4 808.4,564.6 813.0,565.4 818.8,566.6 822.2,567.5 828.0,568.3 863.8,568.4 864.3,567.3 872.8,567.3 882.3,565.5 886.5,564.7 895.0,561.3 904.5,552.5 912.9,548.8 922.4,544.1 929.8,541.2 935.1,541.4 939.9,542.7" fill="none" stroke="#f4f4f4" stroke-width="1"/>
</g>
<text x="980" y="137" font-size="12.5" fill="#dcdcdc" textLength="24" lengthAdjust="spacingAndGlyphs" >4.10</text>
<text x="980" y="191" font-size="12.5" fill="#dcdcdc" textLength="24" lengthAdjust="spacingAndGlyphs" >3.70</text>
<text x="980" y="244" font-size="12.5" fill="#dcdcdc" textLength="24" lengthAdjust="spacingAndGlyphs" >3.30</text>
<text x="980" y="298" font-size="12.5" fill="#dcdcdc" textLength="24" lengthAdjust="spacingAndGlyphs" >2.90</text>
<text x="980" y="344.5" font-size="12.5" fill="#dcdcdc" textLength="24" lengthAdjust="spacingAndGlyphs" >2.50</text>
<text x="980" y="451" font-size="12" fill="#dcdcdc" >114万</text>
<text x="980" y="472" font-size="12" fill="#dcdcdc" >57万</text>
<text x="980" y="491" font-size="12" fill="#dcdcdc" >0</text>
<text x="980" y="531" font-size="12.5" fill="#dcdcdc" textLength="44.5" lengthAdjust="spacingAndGlyphs" >0.16414</text>
<text x="980" y="551" font-size="12.5" fill="#dcdcdc" textLength="44.5" lengthAdjust="spacingAndGlyphs" >0.01308</text>
<text x="980.5" y="571" font-size="12.5" fill="#dcdcdc" textLength="49" lengthAdjust="spacingAndGlyphs" >-0.13798</text>
<text x="29" y="411" font-size="12.5" fill="#dcdcdc" textLength="30.5" lengthAdjust="spacingAndGlyphs" >20.01</text>
<text x="146" y="411" font-size="12.5" fill="#dcdcdc" textLength="30.5" lengthAdjust="spacingAndGlyphs" >20.02</text>
<text x="327" y="411" font-size="12.5" fill="#dcdcdc" textLength="30.5" lengthAdjust="spacingAndGlyphs" >20.03</text>
<text x="526" y="411" font-size="12.5" fill="#dcdcdc" textLength="30.5" lengthAdjust="spacingAndGlyphs" >20.04</text>
<text x="716" y="411" font-size="12.5" fill="#dcdcdc" textLength="30.5" lengthAdjust="spacingAndGlyphs" >20.05</text>
<text x="879" y="411" font-size="12.5" fill="#dcdcdc" textLength="30.5" lengthAdjust="spacingAndGlyphs" >20.06</text>
<text x="43.0" y="15" font-size="13" fill="#dcdcdc" text-anchor="middle" >分时</text>
<text x="85.5" y="15" font-size="13" fill="#dcdcdc" text-anchor="middle" >多日</text>
<text x="125.5" y="15" font-size="13" fill="#dcdcdc" text-anchor="middle" >1分</text>
<text x="162.0" y="15" font-size="13" fill="#dcdcdc" text-anchor="middle" >5分</text>
<text x="203.0" y="15" font-size="13" fill="#dcdcdc" text-anchor="middle" >15分</text>
<text x="248.0" y="15" font-size="13" fill="#dcdcdc" text-anchor="middle" >30分</text>
<text x="292.5" y="15" font-size="13" fill="#dcdcdc" text-anchor="middle" >60分</text>
<text x="329.5" y="15" font-size="13" fill="#dcdcdc" text-anchor="middle" >日</text>
<text x="360.5" y="15" font-size="13" fill="#dcdcdc" text-anchor="middle" >周</text>
<text x="390.0" y="15" font-size="13" fill="#dcdcdc" text-anchor="middle" >月</text>
<text x="423.5" y="15" font-size="13" fill="#dcdcdc" text-anchor="middle" >更多</text>
<text x="719.0" y="15" font-size="13" fill="#dcdcdc" text-anchor="middle" >前复权</text>
<text x="778" y="15" font-size="13" fill="#dcdcdc" text-anchor="middle" >超级叠加</text>
<text x="836.5" y="15" font-size="13" fill="#dcdcdc" text-anchor="middle" >画线</text>
<text x="881.5" y="15" font-size="13" fill="#dcdcdc" text-anchor="middle" >工具</text>
<text x="926.5" y="15" font-size="13" fill="#dcdcdc" text-anchor="middle" >帮助</text>
<text x="971.5" y="15" font-size="13" fill="#dcdcdc" text-anchor="middle" >F9</text>
<text x="1015" y="15" font-size="13" fill="#dcdcdc" text-anchor="middle" >隐藏</text>
<circle cx="807" cy="4" r="3.2" fill="#ff2020"/>
<polygon points="1029,7 1034,10.2 1029,13.4" fill="#d8d8d8"/>
<text x="25" y="36.5" font-size="14" fill="#dcdcdc" textLength="107" lengthAdjust="spacingAndGlyphs" >002348[高乐股份]</text>
<text x="148.5" y="36.5" font-size="14" fill="#dcdcdc" textLength="75" lengthAdjust="spacingAndGlyphs" >2020/06/10</text>
<text x="235" y="35.8" font-size="13" fill="#dcdcdc" >收</text>
<text x="251" y="36.5" font-size="14" fill="#1fb44a" textLength="26.5" lengthAdjust="spacingAndGlyphs" >2.81</text>
<text x="289" y="35.8" font-size="13" fill="#dcdcdc" >幅</text>
<text x="306" y="36.5" font-size="14" fill="#1fb44a" textLength="84" lengthAdjust="spacingAndGlyphs" >-5.70%(-0.17)</text>
<text x="401.5" y="35.8" font-size="13" fill="#dcdcdc" >开</text>
<text x="418.5" y="36.5" font-size="14" fill="#1fb44a" textLength="26" lengthAdjust="spacingAndGlyphs" >2.93</text>
<text x="456" y="35.8" font-size="13" fill="#dcdcdc" >高</text>
<text x="472.5" y="36.5" font-size="14" fill="#1fb44a" textLength="26" lengthAdjust="spacingAndGlyphs" >2.93</text>
<text x="510" y="35.8" font-size="13" fill="#dcdcdc" >低</text>
<text x="526" y="36.5" font-size="14" fill="#1fb44a" textLength="26.5" lengthAdjust="spacingAndGlyphs" >2.76</text>
<text x="563.5" y="35.8" font-size="13" fill="#dcdcdc" >均</text>
<text x="580" y="36.5" font-size="14" fill="#1fb44a" textLength="26.5" lengthAdjust="spacingAndGlyphs" >2.84</text>
<text x="618" y="35.8" font-size="13" fill="#dcdcdc" >量</text>
<text x="634.5" y="36.5" font-size="14" fill="#dcdcdc" textLength="47.5" lengthAdjust="spacingAndGlyphs" >15.19万</text>
<text x="693" y="35.8" font-size="13" fill="#dcdcdc" >换</text>
<text x="709.5" y="36.5" font-size="14" fill="#dcdcdc" textLength="38" lengthAdjust="spacingAndGlyphs" >2.04%</text>
<text x="758.5" y="35.8" font-size="13" fill="#dcdcdc" >振</text>
<text x="775" y="36.5" font-size="14" fill="#dcdcdc" textLength="38.5" lengthAdjust="spacingAndGlyphs" >5.70%</text>
<text x="825" y="35.8" font-size="13" fill="#dcdcdc" >额</text>
<text x="841" y="36.5" font-size="14" fill="#dcdcdc" >4312万</text>
<text x="24.5" y="54.6" font-size="12.5" fill="#f0a000" textLength="61" lengthAdjust="spacingAndGlyphs" >MA(5):3.02</text>
<text x="92" y="54.6" font-size="12.5" fill="#e8e800" textLength="67.5" lengthAdjust="spacingAndGlyphs" >MA(10):2.83</text>
<text x="165.5" y="54.6" font-size="12.5" fill="#ff00ff" textLength="69" lengthAdjust="spacingAndGlyphs" >MA(20):2.73</text>
<text x="240" y="54.6" font-size="12.5" fill="#00a800" textLength="67.5" lengthAdjust="spacingAndGlyphs" >MA(60):2.87</text>
<text x="313.5" y="54.6" font-size="12.5" fill="#55e4f0" textLength="74.5" lengthAdjust="spacingAndGlyphs" >MA(120):3.12</text>
<text x="820.5" y="55" font-size="12.5" fill="#dcdcdc" textLength="177" lengthAdjust="spacingAndGlyphs" >2020/01/07-2020/06/10(102日)</text>
<rect x="820" y="56" width="177" height="1" fill="#dcdcdc"/>
<polygon points="1000,44.5 1013,44.5 1006.5,57" fill="#8c8c8c"/>
<rect x="1020" y="49.5" width="10" height="10.5" rx="1" fill="#f0b43c"/>
<path d="M1029.5,49 L1029.5,46.5 A2.5,2.5 0 0 1 1034.5,46.5 L1034.5,48.5" fill="none" stroke="#f0b43c" stroke-width="1.4"/>
<rect x="1024" y="52" width="2" height="5" fill="#3a2a10"/>
<text x="24.5" y="431" font-size="13" fill="#e8e8e8" textLength="51" lengthAdjust="spacingAndGlyphs" >VOL:15万</text>
<text x="82.5" y="431" font-size="13" fill="#e8e8e8" textLength="62.5" lengthAdjust="spacingAndGlyphs" >MA(5):58万</text>
<text x="151.5" y="431" font-size="13" fill="#f0a000" textLength="70" lengthAdjust="spacingAndGlyphs" >MA(10):35万</text>
<text x="228" y="431" font-size="13" fill="#ff00ff" textLength="70" lengthAdjust="spacingAndGlyphs" >MA(20):21万</text>
<text x="24.5" y="511.2" font-size="13" fill="#e8e8e8" textLength="85.5" lengthAdjust="spacingAndGlyphs" >MACD(12,26,9)</text>
<text x="116" y="511.2" font-size="13" fill="#e8e8e8" textLength="66" lengthAdjust="spacingAndGlyphs" >DIF:0.03634</text>
<text x="188" y="511.2" font-size="13" fill="#f0a000" textLength="75.5" lengthAdjust="spacingAndGlyphs" >DEA:-0.01019</text>
<text x="269.5" y="511.2" font-size="13" fill="#55e4f0" textLength="84" lengthAdjust="spacingAndGlyphs" >MACD:0.09305</text>
<text x="11.5" y="41" font-size="13" fill="#dcdcdc" text-anchor="middle" >分</text>
<text x="11.5" y="60" font-size="13" fill="#dcdcdc" text-anchor="middle" >时</text>
<text x="11.5" y="79" font-size="13" fill="#dcdcdc" text-anchor="middle" >图</text>
<text x="11.5" y="133.8" font-size="13" fill="#f4f4f4" text-anchor="middle" >线</text>
<text x="11.5" y="152.8" font-size="13" fill="#f4f4f4" text-anchor="middle" >图</text>
<text x="11.5" y="115" font-size="14" fill="#f4f4f4" text-anchor="middle" >K</text>
<text x="11.5" y="188" font-size="14" fill="#dcdcdc" text-anchor="middle" >T</text>
<text x="11.5" y="207" font-size="14" fill="#dcdcdc" text-anchor="middle" >I</text>
<text x="11.5" y="226" font-size="14" fill="#dcdcdc" text-anchor="middle" >C</text>
<text x="11.5" y="245" font-size="14" fill="#dcdcdc" text-anchor="middle" >K</text>
<text x="11.5" y="280" font-size="13" fill="#dcdcdc" text-anchor="middle" >成</text>
<text x="11.5" y="299.2" font-size="13" fill="#dcdcdc" text-anchor="middle" >交</text>
<text x="11.5" y="317.5" font-size="13" fill="#dcdcdc" text-anchor="middle" >明</text>
<text x="11.5" y="336.5" font-size="13" fill="#dcdcdc" text-anchor="middle" >细</text>
<text x="11.5" y="371.6" font-size="13" fill="#dcdcdc" text-anchor="middle" >分</text>
<text x="11.5" y="390.6" font-size="13" fill="#dcdcdc" text-anchor="middle" >价</text>
<text x="11.5" y="409.3" font-size="13" fill="#dcdcdc" text-anchor="middle" >表</text>
<text x="11.5" y="445" font-size="13" fill="#dcdcdc" text-anchor="middle" >深</text>
<text x="11.5" y="463.5" font-size="13" fill="#dcdcdc" text-anchor="middle" >度</text>
<text x="11.5" y="482.5" font-size="13" fill="#dcdcdc" text-anchor="middle" >资</text>
<text x="11.5" y="500.7" font-size="13" fill="#dcdcdc" text-anchor="middle" >料</text>
<text x="11.5" y="537.4" font-size="13" fill="#dcdcdc" text-anchor="middle" >超</text>
<text x="11.5" y="556.4" font-size="13" fill="#dcdcdc" text-anchor="middle" >级</text>
<text x="11.5" y="575.4" font-size="13" fill="#dcdcdc" text-anchor="middle" >复</text>
<text x="11.5" y="593.6" font-size="13" fill="#dcdcdc" text-anchor="middle" >盘</text>
<text x="31.5" y="595" font-size="13" fill="#dcdcdc" textLength="38.5" lengthAdjust="spacingAndGlyphs" >市盈率</text>
<text x="103.5" y="595" font-size="13" fill="#dcdcdc" textLength="38.5" lengthAdjust="spacingAndGlyphs" >市净率</text>
<text x="177.5" y="595" font-size="14" fill="#dcdcdc" textLength="32.5" lengthAdjust="spacingAndGlyphs" >BOLL</text>
<text x="244" y="595" font-size="14" fill="#dcdcdc" textLength="23" lengthAdjust="spacingAndGlyphs" >KDJ</text>
<text x="309.5" y="595" font-size="14" fill="#f4f4f4" textLength="40" lengthAdjust="spacingAndGlyphs" >MACD</text>
<text x="384" y="595" font-size="14" fill="#dcdcdc" textLength="19.8" lengthAdjust="spacingAndGlyphs" >RSI</text>
<text x="449.5" y="595" font-size="14" fill="#dcdcdc" textLength="24.2" lengthAdjust="spacingAndGlyphs" >SAR</text>
<text x="514" y="595" font-size="14" fill="#dcdcdc" >W&amp;R</text>
<rect x="576.5" y="582.5" width="16" height="15" fill="none" stroke="#9a9aa0" stroke-width="1"/>
<path d="M584.5,585 V595 M579,590 H590" stroke="#b0b0b4" stroke-width="1"/>
<g fill="#cfcfd0"><path d="M969,574 H983 Q985,574 985,576 V577.5 H970.8 V588.8 H979 V592.5 H969 Q967,592.5 967,590.5 V576 Q967,574 969,574 Z"/><path d="M975,580.8 H985 V593.5 L981.6,590 V584.3 H978 Z"/></g>
<text x="989.3" y="589" font-size="16" fill="#c8c8ca" textLength="44.6" lengthAdjust="spacingAndGlyphs" >格隆汇</text>
</svg></body></html>
